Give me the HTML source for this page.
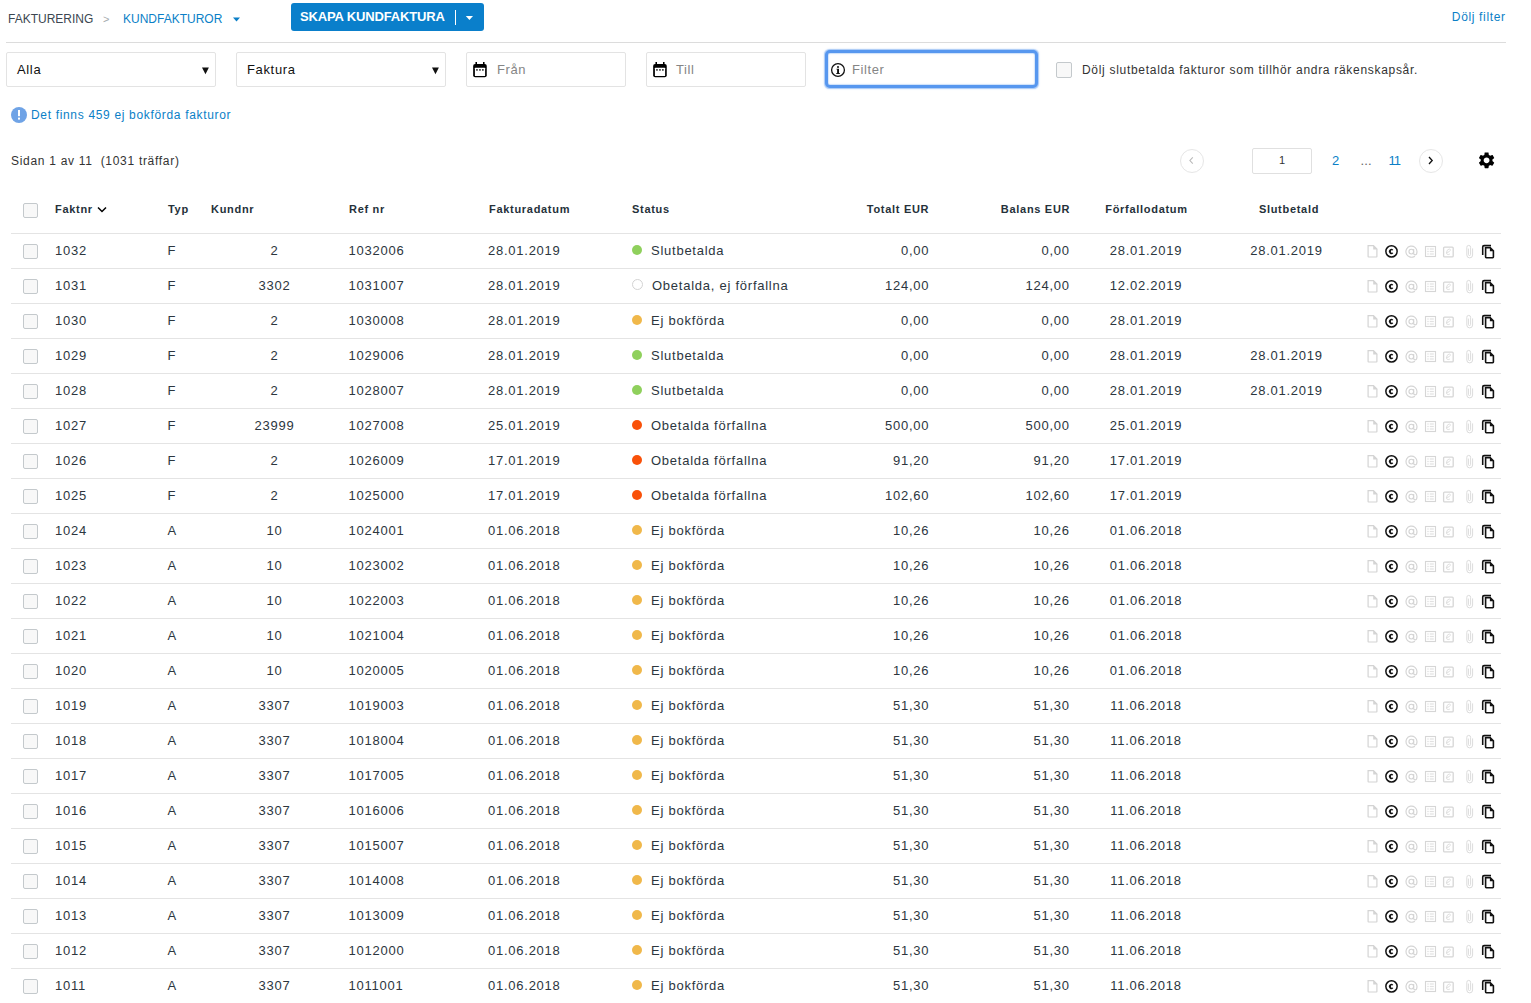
<!DOCTYPE html>
<html><head><meta charset="utf-8"><title>Kundfakturor</title>
<style>
html,body{margin:0;padding:0;background:#fff;width:1531px;height:1003px;overflow:hidden;position:relative}
body{font-family:"Liberation Sans",sans-serif}
.t{position:absolute;white-space:pre;line-height:1;font-family:"Liberation Sans",sans-serif}
svg{display:block}
</style></head><body>
<div class="t" style="left:8px;top:13px;font-size:12px;letter-spacing:0px;color:#3b4751;font-weight:normal;">FAKTURERING</div>
<div class="t" style="left:103px;top:13.5px;font-size:11px;color:#a5aaae">&gt;</div>
<div class="t" style="left:123px;top:13px;font-size:12px;letter-spacing:0px;color:#0b7fc7;font-weight:normal;">KUNDFAKTUROR</div>
<svg style="position:absolute;left:233px;top:17px" width="7" height="5"><path d="M0 0.5 L7 0.5 L3.5 4.5 Z" fill="#0b7fc7"/></svg>
<div style="position:absolute;left:291px;top:3px;width:193px;height:28px;background:#0a7fcb;border-radius:3px"></div>
<div class="t" style="left:300px;top:10px;font-size:13px;letter-spacing:-0.15px;color:#fff;font-weight:bold;">SKAPA KUNDFAKTURA</div>
<div style="position:absolute;left:455px;top:10px;width:1px;height:15px;background:#fff"></div>
<svg style="position:absolute;left:465px;top:15px" width="9" height="6"><path d="M0.8 1 L8 1 L4.4 5 Z" fill="#fff"/></svg>
<div class="t" style="right:25.35px;top:11px;font-size:12px;letter-spacing:0.65px;color:#0b7fc7;font-weight:normal;">Dölj filter</div>
<div style="position:absolute;left:6px;top:42px;width:1500px;height:1px;background:#dcdcdc"></div>
<div style="position:absolute;left:6px;top:52px;width:208px;height:33px;border:1px solid #e3e3e3;border-radius:2px;background:#fff"></div>
<div style="position:absolute;left:236px;top:52px;width:208px;height:33px;border:1px solid #e3e3e3;border-radius:2px;background:#fff"></div>
<div style="position:absolute;left:466px;top:52px;width:158px;height:33px;border:1px solid #e3e3e3;border-radius:2px;background:#fff"></div>
<div style="position:absolute;left:646px;top:52px;width:158px;height:33px;border:1px solid #e3e3e3;border-radius:2px;background:#fff"></div>
<div class="t" style="left:17px;top:63px;font-size:13px;letter-spacing:0.65px;color:#111;font-weight:normal;">Alla</div>
<div class="t" style="left:247px;top:63px;font-size:13px;letter-spacing:0.65px;color:#111;font-weight:normal;">Faktura</div>
<svg style="position:absolute;left:202px;top:67px" width="8" height="8"><path d="M0 0.5 L6.9 0.5 L3.45 7.3 Z" fill="#111"/></svg>
<svg style="position:absolute;left:432px;top:67px" width="8" height="8"><path d="M0 0.5 L6.9 0.5 L3.45 7.3 Z" fill="#111"/></svg>
<svg style="position:absolute;left:472px;top:62px" width="16" height="16" viewBox="0 0 16 16"><rect x="3.45" y="0" width="1.55" height="3" fill="#000"/><rect x="11" y="0" width="1.55" height="3" fill="#000"/><rect x="1.15" y="1.9" width="13.6" height="13.4" rx="2" fill="#000"/><rect x="2.9" y="5.65" width="10.2" height="8.35" rx="0.5" fill="#fff"/><rect x="4.1" y="7.1" width="1.7" height="1.6" fill="#333"/><rect x="7.1" y="7.1" width="1.7" height="1.6" fill="#333"/><rect x="10" y="7.1" width="1.7" height="1.6" fill="#333"/></svg>
<svg style="position:absolute;left:652px;top:62px" width="16" height="16" viewBox="0 0 16 16"><rect x="3.45" y="0" width="1.55" height="3" fill="#000"/><rect x="11" y="0" width="1.55" height="3" fill="#000"/><rect x="1.15" y="1.9" width="13.6" height="13.4" rx="2" fill="#000"/><rect x="2.9" y="5.65" width="10.2" height="8.35" rx="0.5" fill="#fff"/><rect x="4.1" y="7.1" width="1.7" height="1.6" fill="#333"/><rect x="7.1" y="7.1" width="1.7" height="1.6" fill="#333"/><rect x="10" y="7.1" width="1.7" height="1.6" fill="#333"/></svg>
<div class="t" style="left:497px;top:63px;font-size:13px;letter-spacing:0.6px;color:#858585;font-weight:normal;">Från</div>
<div class="t" style="left:676px;top:63px;font-size:13px;letter-spacing:0.6px;color:#858585;font-weight:normal;">Till</div>
<div style="position:absolute;left:825px;top:50px;width:207px;height:32px;border:3px solid #5797ef;border-radius:5px;background:#fff;box-shadow:0 0 1.2px 0.4px rgba(87,151,239,0.55), inset 0 0 1.2px 0.4px rgba(87,151,239,0.55)"></div>
<svg style="position:absolute;left:830px;top:62px" width="16" height="16" viewBox="0 0 16 16"><circle cx="8" cy="8" r="6.4" fill="none" stroke="#111" stroke-width="1.3"/><circle cx="8" cy="4.9" r="1" fill="#111"/><path d="M6.5 6.7 H9 V11 H9.8 V11.9 H6.3 V11 H7.1 V7.6 H6.5 Z" fill="#111"/></svg>
<div class="t" style="left:852px;top:63px;font-size:13px;letter-spacing:0.6px;color:#858585;font-weight:normal;">Filter</div>
<div style="position:absolute;left:1056px;top:62px;width:14px;height:14px;border:1px solid #c4c9cc;border-radius:2px;background:#f8f8f8"></div>
<div class="t" style="left:1082px;top:64px;font-size:12px;letter-spacing:0.7px;color:#333;font-weight:normal;">Dölj slutbetalda fakturor som tillhör andra räkenskapsår.</div>
<svg style="position:absolute;left:11px;top:107px" width="16" height="16" viewBox="0 0 16 16"><circle cx="8" cy="8" r="8" fill="#6fa3e6"/><rect x="7" y="3" width="2" height="6.2" fill="#fff"/><rect x="7" y="10.6" width="2" height="2" fill="#fff"/></svg>
<div class="t" style="left:31px;top:109px;font-size:12px;letter-spacing:0.67px;color:#0b7fc7;font-weight:normal;">Det finns 459 ej bokförda fakturor</div>
<div class="t" style="left:11px;top:155px;font-size:12px;letter-spacing:0.7px;color:#333;font-weight:normal;">Sidan 1 av 11&nbsp; (1031 träffar)</div>
<div style="position:absolute;left:1180px;top:149px;width:22px;height:22px;border:1px solid #e6e6e6;border-radius:50%"></div>
<svg style="position:absolute;left:1188px;top:156px" width="7" height="9"><path d="M4.8 1.3 L1.9 4.5 L4.8 7.7" fill="none" stroke="#b8b8b8" stroke-width="1.1"/></svg>
<div style="position:absolute;left:1252px;top:148px;width:58px;height:24px;border:1px solid #e0e0e0;border-radius:2px"></div>
<div class="t" style="left:1082px;width:400px;text-align:center;top:155px;font-size:11px;letter-spacing:0px;color:#333;font-weight:normal;">1</div>
<div class="t" style="left:1332px;top:154px;font-size:13px;letter-spacing:0px;color:#0b7fc7;font-weight:normal;">2</div>
<div class="t" style="left:1360.5px;top:154px;font-size:13px;letter-spacing:0.2px;color:#666;font-weight:normal;">...</div>
<div class="t" style="left:1388.5px;top:154px;font-size:13px;letter-spacing:-0.9px;color:#0b7fc7;font-weight:normal;">11</div>
<div style="position:absolute;left:1419px;top:149px;width:22px;height:22px;border:1px solid #e6e6e6;border-radius:50%"></div>
<svg style="position:absolute;left:1427px;top:156px" width="7" height="9"><path d="M2 1 L5.2 4.5 L2 8" fill="none" stroke="#111" stroke-width="1.3"/></svg>
<svg style="position:absolute;left:1476px;top:150px" width="20" height="20" viewBox="0 0 20 20"><g transform="translate(0.8 0.57) scale(0.815)"><path fill="#000" d="M19.14 12.94c.04-.3.06-.61.06-.94 0-.32-.02-.64-.07-.94l2.03-1.58c.18-.14.23-.41.12-.61l-1.92-3.32c-.12-.22-.37-.29-.59-.22l-2.39.96c-.5-.38-1.03-.7-1.62-.94l-.36-2.54c-.04-.24-.24-.41-.48-.41h-3.84c-.24 0-.43.17-.47.41l-.36 2.54c-.59.24-1.130.57-1.62.94l-2.39-.96c-.22-.08-.47 0-.59.22L2.74 8.87c-.12.21-.08.47.12.61l2.03 1.58c-.05.3-.09.63-.09.94s.02.64.07.94l-2.03 1.58c-.18.14-.23.41-.12.61l1.92 3.320c.12.22.37.29.59.22l2.39-.96c.5.38 1.03.7 1.62.94l.36 2.54c.05.24.24.41.48.41h3.84c.24 0 .44-.17.47-.41l.36-2.54c.59-.24 1.13-.56 1.62-.94l2.39.96c.22.08.47 0 .59-.22l1.92-3.32c.12-.22.07-.47-.12-.61l-2.01-1.58zM12 15.6c-1.98 0-3.6-1.62-3.6-3.6s1.62-3.6 3.6-3.6 3.6 1.62 3.6 3.6-1.62 3.6-3.6 3.6z"/></g></svg>
<div style="position:absolute;left:23px;top:203px;width:13px;height:13px;border:1px solid #c4c9cc;border-radius:2px;background:#f8f8f8"></div>
<div class="t" style="left:55px;top:204px;font-size:11px;letter-spacing:0.7px;color:#25313a;font-weight:bold;">Faktnr</div>
<svg style="position:absolute;left:97px;top:206px" width="10" height="8"><path d="M1 1.5 L5 5.5 L9 1.5" fill="none" stroke="#000" stroke-width="1.5"/></svg>
<div class="t" style="left:168px;top:204px;font-size:11px;letter-spacing:0.7px;color:#25313a;font-weight:bold;">Typ</div>
<div class="t" style="left:211px;top:204px;font-size:11px;letter-spacing:0.7px;color:#25313a;font-weight:bold;">Kundnr</div>
<div class="t" style="left:349px;top:204px;font-size:11px;letter-spacing:0.7px;color:#25313a;font-weight:bold;">Ref nr</div>
<div class="t" style="left:489px;top:204px;font-size:11px;letter-spacing:0.7px;color:#25313a;font-weight:bold;">Fakturadatum</div>
<div class="t" style="left:632px;top:204px;font-size:11px;letter-spacing:0.7px;color:#25313a;font-weight:bold;">Status</div>
<div class="t" style="right:601.8px;top:204px;font-size:11px;letter-spacing:0.7px;color:#25313a;font-weight:bold;">Totalt EUR</div>
<div class="t" style="right:460.8px;top:204px;font-size:11px;letter-spacing:0.7px;color:#25313a;font-weight:bold;">Balans EUR</div>
<div class="t" style="left:946.5px;width:400px;text-align:center;top:204px;font-size:11px;letter-spacing:0.7px;color:#25313a;font-weight:bold;">Förfallodatum</div>
<div class="t" style="left:1089px;width:400px;text-align:center;top:204px;font-size:11px;letter-spacing:0.7px;color:#25313a;font-weight:bold;">Slutbetald</div>
<div style="position:absolute;left:11px;top:233px;width:1490px;height:1px;background:#e4e4e4"></div>
<div style="position:absolute;left:11px;top:268px;width:1490px;height:1px;background:#e4e4e4"></div>
<div style="position:absolute;left:11px;top:303px;width:1490px;height:1px;background:#e4e4e4"></div>
<div style="position:absolute;left:11px;top:338px;width:1490px;height:1px;background:#e4e4e4"></div>
<div style="position:absolute;left:11px;top:373px;width:1490px;height:1px;background:#e4e4e4"></div>
<div style="position:absolute;left:11px;top:408px;width:1490px;height:1px;background:#e4e4e4"></div>
<div style="position:absolute;left:11px;top:443px;width:1490px;height:1px;background:#e4e4e4"></div>
<div style="position:absolute;left:11px;top:478px;width:1490px;height:1px;background:#e4e4e4"></div>
<div style="position:absolute;left:11px;top:513px;width:1490px;height:1px;background:#e4e4e4"></div>
<div style="position:absolute;left:11px;top:548px;width:1490px;height:1px;background:#e4e4e4"></div>
<div style="position:absolute;left:11px;top:583px;width:1490px;height:1px;background:#e4e4e4"></div>
<div style="position:absolute;left:11px;top:618px;width:1490px;height:1px;background:#e4e4e4"></div>
<div style="position:absolute;left:11px;top:653px;width:1490px;height:1px;background:#e4e4e4"></div>
<div style="position:absolute;left:11px;top:688px;width:1490px;height:1px;background:#e4e4e4"></div>
<div style="position:absolute;left:11px;top:723px;width:1490px;height:1px;background:#e4e4e4"></div>
<div style="position:absolute;left:11px;top:758px;width:1490px;height:1px;background:#e4e4e4"></div>
<div style="position:absolute;left:11px;top:793px;width:1490px;height:1px;background:#e4e4e4"></div>
<div style="position:absolute;left:11px;top:828px;width:1490px;height:1px;background:#e4e4e4"></div>
<div style="position:absolute;left:11px;top:863px;width:1490px;height:1px;background:#e4e4e4"></div>
<div style="position:absolute;left:11px;top:898px;width:1490px;height:1px;background:#e4e4e4"></div>
<div style="position:absolute;left:11px;top:933px;width:1490px;height:1px;background:#e4e4e4"></div>
<div style="position:absolute;left:11px;top:968px;width:1490px;height:1px;background:#e4e4e4"></div>
<div style="position:absolute;left:11px;top:1003px;width:1490px;height:1px;background:#e4e4e4"></div>
<div style="position:absolute;left:23px;top:244px;width:13px;height:13px;border:1px solid #c4c9cc;border-radius:2px;background:#f8f8f8"></div>
<div class="t" style="left:55px;top:244px;font-size:13px;letter-spacing:0.75px;color:#2c363e;font-weight:normal;">1032</div>
<div class="t" style="left:167.5px;top:244px;font-size:13px;letter-spacing:0.75px;color:#2c363e;font-weight:normal;">F</div>
<div class="t" style="left:74.5px;width:400px;text-align:center;top:244px;font-size:13px;letter-spacing:0.75px;color:#2c363e;font-weight:normal;">2</div>
<div class="t" style="left:348.5px;top:244px;font-size:13px;letter-spacing:0.75px;color:#2c363e;font-weight:normal;">1032006</div>
<div class="t" style="left:488px;top:244px;font-size:13px;letter-spacing:0.75px;color:#2c363e;font-weight:normal;">28.01.2019</div>
<div style="position:absolute;left:632px;top:245px;width:10px;height:10px;border-radius:50%;background:#8fd05c"></div>
<div class="t" style="left:651px;top:244px;font-size:13px;letter-spacing:0.75px;color:#2c363e;font-weight:normal;">Slutbetalda</div>
<div class="t" style="right:601.75px;top:244px;font-size:13px;letter-spacing:0.75px;color:#2c363e;font-weight:normal;">0,00</div>
<div class="t" style="right:461.25px;top:244px;font-size:13px;letter-spacing:0.75px;color:#2c363e;font-weight:normal;">0,00</div>
<div class="t" style="left:946px;width:400px;text-align:center;top:244px;font-size:13px;letter-spacing:0.75px;color:#2c363e;font-weight:normal;">28.01.2019</div>
<div class="t" style="left:1086.5px;width:400px;text-align:center;top:244px;font-size:13px;letter-spacing:0.75px;color:#2c363e;font-weight:normal;">28.01.2019</div>
<svg style="position:absolute;left:1366px;top:244px" width="132" height="16" viewBox="0 0 132 16">
<path d="M2.1 1.7 H7.5 L10.9 5.1 V12.6 Q10.9 13 10.5 13 H2.5 Q2.1 13 2.1 12.6 Z" fill="none" stroke="#d4d4d4" stroke-width="1.2"/><path d="M7.2 1.2 L11.4 5.4 H7.2 Z" fill="#d4d4d4"/>
<circle cx="25.5" cy="7.35" r="5.65" fill="none" stroke="#111" stroke-width="1.5"/><path d="M27.35 5.95 A2.45 2.55 0 1 0 27.35 9.05 L26.05 8.45 A0.8 1.05 0 1 1 26.05 6.55 Z" fill="#111"/>
<circle cx="45.3" cy="7.6" r="2.35" fill="none" stroke="#d4d4d4" stroke-width="1.15"/><path d="M47.65 5 V9.3 Q47.65 10.9 49.1 10.9 Q51 10.9 51 7.6 A5.55 5.55 0 1 0 48.3 12.4 L48.9 12.9" fill="none" stroke="#d4d4d4" stroke-width="1.15"/>
<rect x="59.5" y="2.5" width="10" height="10" fill="none" stroke="#d6d6d6" stroke-width="1.1"/><rect x="61.3" y="4.4" width="1.4" height="1.2" fill="#e2e2e2"/><rect x="61.3" y="6.9" width="1.4" height="1.2" fill="#e2e2e2"/><rect x="61.3" y="9.4" width="1.4" height="1.2" fill="#e2e2e2"/><rect x="63.8" y="4.4" width="4" height="1.2" fill="#e2e2e2"/><rect x="63.8" y="6.9" width="4" height="1.2" fill="#e2e2e2"/><rect x="63.8" y="9.4" width="4" height="1.2" fill="#e2e2e2"/>
<rect x="77.6" y="3.1" width="9.6" height="9.8" rx="1" fill="none" stroke="#d6d6d6" stroke-width="1.3"/><path d="M80.4 8.6 Q83.5 8.3 84.3 6.3 Q84.6 5 83.4 5 Q81.2 5.1 80.5 8.2 Q80.2 10.6 82.2 10.6 Q83.3 10.5 84 9.8" fill="none" stroke="#d8d8d8" stroke-width="0.8"/>
<path d="M102.4 4.6 V10.4 A1.1 1.1 0 0 0 104.6 10.4 V3.3 A1.9 1.9 0 0 0 100.8 3.3 V11 A2.9 2.9 0 0 0 106.6 11 V4.4" fill="none" stroke="#dcdcdc" stroke-width="1"/>
<path d="M116.7 10.9 V3 Q116.7 1.6 118.1 1.6 H125" fill="none" stroke="#111" stroke-width="1.55"/><path d="M119.6 3.8 H124.3 L127.4 6.9 V13.1 Q127.4 13.7 126.8 13.7 H120.2 Q119.6 13.7 119.6 13.1 Z" fill="none" stroke="#111" stroke-width="1.6"/><path d="M123.9 3.4 L127.8 7.3 H123.9 Z" fill="#111"/>
</svg>
<div style="position:absolute;left:23px;top:279px;width:13px;height:13px;border:1px solid #c4c9cc;border-radius:2px;background:#f8f8f8"></div>
<div class="t" style="left:55px;top:279px;font-size:13px;letter-spacing:0.75px;color:#2c363e;font-weight:normal;">1031</div>
<div class="t" style="left:167.5px;top:279px;font-size:13px;letter-spacing:0.75px;color:#2c363e;font-weight:normal;">F</div>
<div class="t" style="left:74.5px;width:400px;text-align:center;top:279px;font-size:13px;letter-spacing:0.75px;color:#2c363e;font-weight:normal;">3302</div>
<div class="t" style="left:348.5px;top:279px;font-size:13px;letter-spacing:0.75px;color:#2c363e;font-weight:normal;">1031007</div>
<div class="t" style="left:488px;top:279px;font-size:13px;letter-spacing:0.75px;color:#2c363e;font-weight:normal;">28.01.2019</div>
<div style="position:absolute;left:632px;top:279px;width:9px;height:9px;border-radius:50%;border:1px solid #d3d3d3"></div>
<div class="t" style="left:652px;top:279px;font-size:13px;letter-spacing:0.75px;color:#2c363e;font-weight:normal;">Obetalda, ej förfallna</div>
<div class="t" style="right:601.75px;top:279px;font-size:13px;letter-spacing:0.75px;color:#2c363e;font-weight:normal;">124,00</div>
<div class="t" style="right:461.25px;top:279px;font-size:13px;letter-spacing:0.75px;color:#2c363e;font-weight:normal;">124,00</div>
<div class="t" style="left:946px;width:400px;text-align:center;top:279px;font-size:13px;letter-spacing:0.75px;color:#2c363e;font-weight:normal;">12.02.2019</div>
<svg style="position:absolute;left:1366px;top:279px" width="132" height="16" viewBox="0 0 132 16">
<path d="M2.1 1.7 H7.5 L10.9 5.1 V12.6 Q10.9 13 10.5 13 H2.5 Q2.1 13 2.1 12.6 Z" fill="none" stroke="#d4d4d4" stroke-width="1.2"/><path d="M7.2 1.2 L11.4 5.4 H7.2 Z" fill="#d4d4d4"/>
<circle cx="25.5" cy="7.35" r="5.65" fill="none" stroke="#111" stroke-width="1.5"/><path d="M27.35 5.95 A2.45 2.55 0 1 0 27.35 9.05 L26.05 8.45 A0.8 1.05 0 1 1 26.05 6.55 Z" fill="#111"/>
<circle cx="45.3" cy="7.6" r="2.35" fill="none" stroke="#d4d4d4" stroke-width="1.15"/><path d="M47.65 5 V9.3 Q47.65 10.9 49.1 10.9 Q51 10.9 51 7.6 A5.55 5.55 0 1 0 48.3 12.4 L48.9 12.9" fill="none" stroke="#d4d4d4" stroke-width="1.15"/>
<rect x="59.5" y="2.5" width="10" height="10" fill="none" stroke="#d6d6d6" stroke-width="1.1"/><rect x="61.3" y="4.4" width="1.4" height="1.2" fill="#e2e2e2"/><rect x="61.3" y="6.9" width="1.4" height="1.2" fill="#e2e2e2"/><rect x="61.3" y="9.4" width="1.4" height="1.2" fill="#e2e2e2"/><rect x="63.8" y="4.4" width="4" height="1.2" fill="#e2e2e2"/><rect x="63.8" y="6.9" width="4" height="1.2" fill="#e2e2e2"/><rect x="63.8" y="9.4" width="4" height="1.2" fill="#e2e2e2"/>
<rect x="77.6" y="3.1" width="9.6" height="9.8" rx="1" fill="none" stroke="#d6d6d6" stroke-width="1.3"/><path d="M80.4 8.6 Q83.5 8.3 84.3 6.3 Q84.6 5 83.4 5 Q81.2 5.1 80.5 8.2 Q80.2 10.6 82.2 10.6 Q83.3 10.5 84 9.8" fill="none" stroke="#d8d8d8" stroke-width="0.8"/>
<path d="M102.4 4.6 V10.4 A1.1 1.1 0 0 0 104.6 10.4 V3.3 A1.9 1.9 0 0 0 100.8 3.3 V11 A2.9 2.9 0 0 0 106.6 11 V4.4" fill="none" stroke="#dcdcdc" stroke-width="1"/>
<path d="M116.7 10.9 V3 Q116.7 1.6 118.1 1.6 H125" fill="none" stroke="#111" stroke-width="1.55"/><path d="M119.6 3.8 H124.3 L127.4 6.9 V13.1 Q127.4 13.7 126.8 13.7 H120.2 Q119.6 13.7 119.6 13.1 Z" fill="none" stroke="#111" stroke-width="1.6"/><path d="M123.9 3.4 L127.8 7.3 H123.9 Z" fill="#111"/>
</svg>
<div style="position:absolute;left:23px;top:314px;width:13px;height:13px;border:1px solid #c4c9cc;border-radius:2px;background:#f8f8f8"></div>
<div class="t" style="left:55px;top:314px;font-size:13px;letter-spacing:0.75px;color:#2c363e;font-weight:normal;">1030</div>
<div class="t" style="left:167.5px;top:314px;font-size:13px;letter-spacing:0.75px;color:#2c363e;font-weight:normal;">F</div>
<div class="t" style="left:74.5px;width:400px;text-align:center;top:314px;font-size:13px;letter-spacing:0.75px;color:#2c363e;font-weight:normal;">2</div>
<div class="t" style="left:348.5px;top:314px;font-size:13px;letter-spacing:0.75px;color:#2c363e;font-weight:normal;">1030008</div>
<div class="t" style="left:488px;top:314px;font-size:13px;letter-spacing:0.75px;color:#2c363e;font-weight:normal;">28.01.2019</div>
<div style="position:absolute;left:632px;top:315px;width:10px;height:10px;border-radius:50%;background:#f0b84a"></div>
<div class="t" style="left:651px;top:314px;font-size:13px;letter-spacing:0.75px;color:#2c363e;font-weight:normal;">Ej bokförda</div>
<div class="t" style="right:601.75px;top:314px;font-size:13px;letter-spacing:0.75px;color:#2c363e;font-weight:normal;">0,00</div>
<div class="t" style="right:461.25px;top:314px;font-size:13px;letter-spacing:0.75px;color:#2c363e;font-weight:normal;">0,00</div>
<div class="t" style="left:946px;width:400px;text-align:center;top:314px;font-size:13px;letter-spacing:0.75px;color:#2c363e;font-weight:normal;">28.01.2019</div>
<svg style="position:absolute;left:1366px;top:314px" width="132" height="16" viewBox="0 0 132 16">
<path d="M2.1 1.7 H7.5 L10.9 5.1 V12.6 Q10.9 13 10.5 13 H2.5 Q2.1 13 2.1 12.6 Z" fill="none" stroke="#d4d4d4" stroke-width="1.2"/><path d="M7.2 1.2 L11.4 5.4 H7.2 Z" fill="#d4d4d4"/>
<circle cx="25.5" cy="7.35" r="5.65" fill="none" stroke="#111" stroke-width="1.5"/><path d="M27.35 5.95 A2.45 2.55 0 1 0 27.35 9.05 L26.05 8.45 A0.8 1.05 0 1 1 26.05 6.55 Z" fill="#111"/>
<circle cx="45.3" cy="7.6" r="2.35" fill="none" stroke="#d4d4d4" stroke-width="1.15"/><path d="M47.65 5 V9.3 Q47.65 10.9 49.1 10.9 Q51 10.9 51 7.6 A5.55 5.55 0 1 0 48.3 12.4 L48.9 12.9" fill="none" stroke="#d4d4d4" stroke-width="1.15"/>
<rect x="59.5" y="2.5" width="10" height="10" fill="none" stroke="#d6d6d6" stroke-width="1.1"/><rect x="61.3" y="4.4" width="1.4" height="1.2" fill="#e2e2e2"/><rect x="61.3" y="6.9" width="1.4" height="1.2" fill="#e2e2e2"/><rect x="61.3" y="9.4" width="1.4" height="1.2" fill="#e2e2e2"/><rect x="63.8" y="4.4" width="4" height="1.2" fill="#e2e2e2"/><rect x="63.8" y="6.9" width="4" height="1.2" fill="#e2e2e2"/><rect x="63.8" y="9.4" width="4" height="1.2" fill="#e2e2e2"/>
<rect x="77.6" y="3.1" width="9.6" height="9.8" rx="1" fill="none" stroke="#d6d6d6" stroke-width="1.3"/><path d="M80.4 8.6 Q83.5 8.3 84.3 6.3 Q84.6 5 83.4 5 Q81.2 5.1 80.5 8.2 Q80.2 10.6 82.2 10.6 Q83.3 10.5 84 9.8" fill="none" stroke="#d8d8d8" stroke-width="0.8"/>
<path d="M102.4 4.6 V10.4 A1.1 1.1 0 0 0 104.6 10.4 V3.3 A1.9 1.9 0 0 0 100.8 3.3 V11 A2.9 2.9 0 0 0 106.6 11 V4.4" fill="none" stroke="#dcdcdc" stroke-width="1"/>
<path d="M116.7 10.9 V3 Q116.7 1.6 118.1 1.6 H125" fill="none" stroke="#111" stroke-width="1.55"/><path d="M119.6 3.8 H124.3 L127.4 6.9 V13.1 Q127.4 13.7 126.8 13.7 H120.2 Q119.6 13.7 119.6 13.1 Z" fill="none" stroke="#111" stroke-width="1.6"/><path d="M123.9 3.4 L127.8 7.3 H123.9 Z" fill="#111"/>
</svg>
<div style="position:absolute;left:23px;top:349px;width:13px;height:13px;border:1px solid #c4c9cc;border-radius:2px;background:#f8f8f8"></div>
<div class="t" style="left:55px;top:349px;font-size:13px;letter-spacing:0.75px;color:#2c363e;font-weight:normal;">1029</div>
<div class="t" style="left:167.5px;top:349px;font-size:13px;letter-spacing:0.75px;color:#2c363e;font-weight:normal;">F</div>
<div class="t" style="left:74.5px;width:400px;text-align:center;top:349px;font-size:13px;letter-spacing:0.75px;color:#2c363e;font-weight:normal;">2</div>
<div class="t" style="left:348.5px;top:349px;font-size:13px;letter-spacing:0.75px;color:#2c363e;font-weight:normal;">1029006</div>
<div class="t" style="left:488px;top:349px;font-size:13px;letter-spacing:0.75px;color:#2c363e;font-weight:normal;">28.01.2019</div>
<div style="position:absolute;left:632px;top:350px;width:10px;height:10px;border-radius:50%;background:#8fd05c"></div>
<div class="t" style="left:651px;top:349px;font-size:13px;letter-spacing:0.75px;color:#2c363e;font-weight:normal;">Slutbetalda</div>
<div class="t" style="right:601.75px;top:349px;font-size:13px;letter-spacing:0.75px;color:#2c363e;font-weight:normal;">0,00</div>
<div class="t" style="right:461.25px;top:349px;font-size:13px;letter-spacing:0.75px;color:#2c363e;font-weight:normal;">0,00</div>
<div class="t" style="left:946px;width:400px;text-align:center;top:349px;font-size:13px;letter-spacing:0.75px;color:#2c363e;font-weight:normal;">28.01.2019</div>
<div class="t" style="left:1086.5px;width:400px;text-align:center;top:349px;font-size:13px;letter-spacing:0.75px;color:#2c363e;font-weight:normal;">28.01.2019</div>
<svg style="position:absolute;left:1366px;top:349px" width="132" height="16" viewBox="0 0 132 16">
<path d="M2.1 1.7 H7.5 L10.9 5.1 V12.6 Q10.9 13 10.5 13 H2.5 Q2.1 13 2.1 12.6 Z" fill="none" stroke="#d4d4d4" stroke-width="1.2"/><path d="M7.2 1.2 L11.4 5.4 H7.2 Z" fill="#d4d4d4"/>
<circle cx="25.5" cy="7.35" r="5.65" fill="none" stroke="#111" stroke-width="1.5"/><path d="M27.35 5.95 A2.45 2.55 0 1 0 27.35 9.05 L26.05 8.45 A0.8 1.05 0 1 1 26.05 6.55 Z" fill="#111"/>
<circle cx="45.3" cy="7.6" r="2.35" fill="none" stroke="#d4d4d4" stroke-width="1.15"/><path d="M47.65 5 V9.3 Q47.65 10.9 49.1 10.9 Q51 10.9 51 7.6 A5.55 5.55 0 1 0 48.3 12.4 L48.9 12.9" fill="none" stroke="#d4d4d4" stroke-width="1.15"/>
<rect x="59.5" y="2.5" width="10" height="10" fill="none" stroke="#d6d6d6" stroke-width="1.1"/><rect x="61.3" y="4.4" width="1.4" height="1.2" fill="#e2e2e2"/><rect x="61.3" y="6.9" width="1.4" height="1.2" fill="#e2e2e2"/><rect x="61.3" y="9.4" width="1.4" height="1.2" fill="#e2e2e2"/><rect x="63.8" y="4.4" width="4" height="1.2" fill="#e2e2e2"/><rect x="63.8" y="6.9" width="4" height="1.2" fill="#e2e2e2"/><rect x="63.8" y="9.4" width="4" height="1.2" fill="#e2e2e2"/>
<rect x="77.6" y="3.1" width="9.6" height="9.8" rx="1" fill="none" stroke="#d6d6d6" stroke-width="1.3"/><path d="M80.4 8.6 Q83.5 8.3 84.3 6.3 Q84.6 5 83.4 5 Q81.2 5.1 80.5 8.2 Q80.2 10.6 82.2 10.6 Q83.3 10.5 84 9.8" fill="none" stroke="#d8d8d8" stroke-width="0.8"/>
<path d="M102.4 4.6 V10.4 A1.1 1.1 0 0 0 104.6 10.4 V3.3 A1.9 1.9 0 0 0 100.8 3.3 V11 A2.9 2.9 0 0 0 106.6 11 V4.4" fill="none" stroke="#dcdcdc" stroke-width="1"/>
<path d="M116.7 10.9 V3 Q116.7 1.6 118.1 1.6 H125" fill="none" stroke="#111" stroke-width="1.55"/><path d="M119.6 3.8 H124.3 L127.4 6.9 V13.1 Q127.4 13.7 126.8 13.7 H120.2 Q119.6 13.7 119.6 13.1 Z" fill="none" stroke="#111" stroke-width="1.6"/><path d="M123.9 3.4 L127.8 7.3 H123.9 Z" fill="#111"/>
</svg>
<div style="position:absolute;left:23px;top:384px;width:13px;height:13px;border:1px solid #c4c9cc;border-radius:2px;background:#f8f8f8"></div>
<div class="t" style="left:55px;top:384px;font-size:13px;letter-spacing:0.75px;color:#2c363e;font-weight:normal;">1028</div>
<div class="t" style="left:167.5px;top:384px;font-size:13px;letter-spacing:0.75px;color:#2c363e;font-weight:normal;">F</div>
<div class="t" style="left:74.5px;width:400px;text-align:center;top:384px;font-size:13px;letter-spacing:0.75px;color:#2c363e;font-weight:normal;">2</div>
<div class="t" style="left:348.5px;top:384px;font-size:13px;letter-spacing:0.75px;color:#2c363e;font-weight:normal;">1028007</div>
<div class="t" style="left:488px;top:384px;font-size:13px;letter-spacing:0.75px;color:#2c363e;font-weight:normal;">28.01.2019</div>
<div style="position:absolute;left:632px;top:385px;width:10px;height:10px;border-radius:50%;background:#8fd05c"></div>
<div class="t" style="left:651px;top:384px;font-size:13px;letter-spacing:0.75px;color:#2c363e;font-weight:normal;">Slutbetalda</div>
<div class="t" style="right:601.75px;top:384px;font-size:13px;letter-spacing:0.75px;color:#2c363e;font-weight:normal;">0,00</div>
<div class="t" style="right:461.25px;top:384px;font-size:13px;letter-spacing:0.75px;color:#2c363e;font-weight:normal;">0,00</div>
<div class="t" style="left:946px;width:400px;text-align:center;top:384px;font-size:13px;letter-spacing:0.75px;color:#2c363e;font-weight:normal;">28.01.2019</div>
<div class="t" style="left:1086.5px;width:400px;text-align:center;top:384px;font-size:13px;letter-spacing:0.75px;color:#2c363e;font-weight:normal;">28.01.2019</div>
<svg style="position:absolute;left:1366px;top:384px" width="132" height="16" viewBox="0 0 132 16">
<path d="M2.1 1.7 H7.5 L10.9 5.1 V12.6 Q10.9 13 10.5 13 H2.5 Q2.1 13 2.1 12.6 Z" fill="none" stroke="#d4d4d4" stroke-width="1.2"/><path d="M7.2 1.2 L11.4 5.4 H7.2 Z" fill="#d4d4d4"/>
<circle cx="25.5" cy="7.35" r="5.65" fill="none" stroke="#111" stroke-width="1.5"/><path d="M27.35 5.95 A2.45 2.55 0 1 0 27.35 9.05 L26.05 8.45 A0.8 1.05 0 1 1 26.05 6.55 Z" fill="#111"/>
<circle cx="45.3" cy="7.6" r="2.35" fill="none" stroke="#d4d4d4" stroke-width="1.15"/><path d="M47.65 5 V9.3 Q47.65 10.9 49.1 10.9 Q51 10.9 51 7.6 A5.55 5.55 0 1 0 48.3 12.4 L48.9 12.9" fill="none" stroke="#d4d4d4" stroke-width="1.15"/>
<rect x="59.5" y="2.5" width="10" height="10" fill="none" stroke="#d6d6d6" stroke-width="1.1"/><rect x="61.3" y="4.4" width="1.4" height="1.2" fill="#e2e2e2"/><rect x="61.3" y="6.9" width="1.4" height="1.2" fill="#e2e2e2"/><rect x="61.3" y="9.4" width="1.4" height="1.2" fill="#e2e2e2"/><rect x="63.8" y="4.4" width="4" height="1.2" fill="#e2e2e2"/><rect x="63.8" y="6.9" width="4" height="1.2" fill="#e2e2e2"/><rect x="63.8" y="9.4" width="4" height="1.2" fill="#e2e2e2"/>
<rect x="77.6" y="3.1" width="9.6" height="9.8" rx="1" fill="none" stroke="#d6d6d6" stroke-width="1.3"/><path d="M80.4 8.6 Q83.5 8.3 84.3 6.3 Q84.6 5 83.4 5 Q81.2 5.1 80.5 8.2 Q80.2 10.6 82.2 10.6 Q83.3 10.5 84 9.8" fill="none" stroke="#d8d8d8" stroke-width="0.8"/>
<path d="M102.4 4.6 V10.4 A1.1 1.1 0 0 0 104.6 10.4 V3.3 A1.9 1.9 0 0 0 100.8 3.3 V11 A2.9 2.9 0 0 0 106.6 11 V4.4" fill="none" stroke="#dcdcdc" stroke-width="1"/>
<path d="M116.7 10.9 V3 Q116.7 1.6 118.1 1.6 H125" fill="none" stroke="#111" stroke-width="1.55"/><path d="M119.6 3.8 H124.3 L127.4 6.9 V13.1 Q127.4 13.7 126.8 13.7 H120.2 Q119.6 13.7 119.6 13.1 Z" fill="none" stroke="#111" stroke-width="1.6"/><path d="M123.9 3.4 L127.8 7.3 H123.9 Z" fill="#111"/>
</svg>
<div style="position:absolute;left:23px;top:419px;width:13px;height:13px;border:1px solid #c4c9cc;border-radius:2px;background:#f8f8f8"></div>
<div class="t" style="left:55px;top:419px;font-size:13px;letter-spacing:0.75px;color:#2c363e;font-weight:normal;">1027</div>
<div class="t" style="left:167.5px;top:419px;font-size:13px;letter-spacing:0.75px;color:#2c363e;font-weight:normal;">F</div>
<div class="t" style="left:74.5px;width:400px;text-align:center;top:419px;font-size:13px;letter-spacing:0.75px;color:#2c363e;font-weight:normal;">23999</div>
<div class="t" style="left:348.5px;top:419px;font-size:13px;letter-spacing:0.75px;color:#2c363e;font-weight:normal;">1027008</div>
<div class="t" style="left:488px;top:419px;font-size:13px;letter-spacing:0.75px;color:#2c363e;font-weight:normal;">25.01.2019</div>
<div style="position:absolute;left:632px;top:420px;width:10px;height:10px;border-radius:50%;background:#f95109"></div>
<div class="t" style="left:651px;top:419px;font-size:13px;letter-spacing:0.75px;color:#2c363e;font-weight:normal;">Obetalda förfallna</div>
<div class="t" style="right:601.75px;top:419px;font-size:13px;letter-spacing:0.75px;color:#2c363e;font-weight:normal;">500,00</div>
<div class="t" style="right:461.25px;top:419px;font-size:13px;letter-spacing:0.75px;color:#2c363e;font-weight:normal;">500,00</div>
<div class="t" style="left:946px;width:400px;text-align:center;top:419px;font-size:13px;letter-spacing:0.75px;color:#2c363e;font-weight:normal;">25.01.2019</div>
<svg style="position:absolute;left:1366px;top:419px" width="132" height="16" viewBox="0 0 132 16">
<path d="M2.1 1.7 H7.5 L10.9 5.1 V12.6 Q10.9 13 10.5 13 H2.5 Q2.1 13 2.1 12.6 Z" fill="none" stroke="#d4d4d4" stroke-width="1.2"/><path d="M7.2 1.2 L11.4 5.4 H7.2 Z" fill="#d4d4d4"/>
<circle cx="25.5" cy="7.35" r="5.65" fill="none" stroke="#111" stroke-width="1.5"/><path d="M27.35 5.95 A2.45 2.55 0 1 0 27.35 9.05 L26.05 8.45 A0.8 1.05 0 1 1 26.05 6.55 Z" fill="#111"/>
<circle cx="45.3" cy="7.6" r="2.35" fill="none" stroke="#d4d4d4" stroke-width="1.15"/><path d="M47.65 5 V9.3 Q47.65 10.9 49.1 10.9 Q51 10.9 51 7.6 A5.55 5.55 0 1 0 48.3 12.4 L48.9 12.9" fill="none" stroke="#d4d4d4" stroke-width="1.15"/>
<rect x="59.5" y="2.5" width="10" height="10" fill="none" stroke="#d6d6d6" stroke-width="1.1"/><rect x="61.3" y="4.4" width="1.4" height="1.2" fill="#e2e2e2"/><rect x="61.3" y="6.9" width="1.4" height="1.2" fill="#e2e2e2"/><rect x="61.3" y="9.4" width="1.4" height="1.2" fill="#e2e2e2"/><rect x="63.8" y="4.4" width="4" height="1.2" fill="#e2e2e2"/><rect x="63.8" y="6.9" width="4" height="1.2" fill="#e2e2e2"/><rect x="63.8" y="9.4" width="4" height="1.2" fill="#e2e2e2"/>
<rect x="77.6" y="3.1" width="9.6" height="9.8" rx="1" fill="none" stroke="#d6d6d6" stroke-width="1.3"/><path d="M80.4 8.6 Q83.5 8.3 84.3 6.3 Q84.6 5 83.4 5 Q81.2 5.1 80.5 8.2 Q80.2 10.6 82.2 10.6 Q83.3 10.5 84 9.8" fill="none" stroke="#d8d8d8" stroke-width="0.8"/>
<path d="M102.4 4.6 V10.4 A1.1 1.1 0 0 0 104.6 10.4 V3.3 A1.9 1.9 0 0 0 100.8 3.3 V11 A2.9 2.9 0 0 0 106.6 11 V4.4" fill="none" stroke="#dcdcdc" stroke-width="1"/>
<path d="M116.7 10.9 V3 Q116.7 1.6 118.1 1.6 H125" fill="none" stroke="#111" stroke-width="1.55"/><path d="M119.6 3.8 H124.3 L127.4 6.9 V13.1 Q127.4 13.7 126.8 13.7 H120.2 Q119.6 13.7 119.6 13.1 Z" fill="none" stroke="#111" stroke-width="1.6"/><path d="M123.9 3.4 L127.8 7.3 H123.9 Z" fill="#111"/>
</svg>
<div style="position:absolute;left:23px;top:454px;width:13px;height:13px;border:1px solid #c4c9cc;border-radius:2px;background:#f8f8f8"></div>
<div class="t" style="left:55px;top:454px;font-size:13px;letter-spacing:0.75px;color:#2c363e;font-weight:normal;">1026</div>
<div class="t" style="left:167.5px;top:454px;font-size:13px;letter-spacing:0.75px;color:#2c363e;font-weight:normal;">F</div>
<div class="t" style="left:74.5px;width:400px;text-align:center;top:454px;font-size:13px;letter-spacing:0.75px;color:#2c363e;font-weight:normal;">2</div>
<div class="t" style="left:348.5px;top:454px;font-size:13px;letter-spacing:0.75px;color:#2c363e;font-weight:normal;">1026009</div>
<div class="t" style="left:488px;top:454px;font-size:13px;letter-spacing:0.75px;color:#2c363e;font-weight:normal;">17.01.2019</div>
<div style="position:absolute;left:632px;top:455px;width:10px;height:10px;border-radius:50%;background:#f95109"></div>
<div class="t" style="left:651px;top:454px;font-size:13px;letter-spacing:0.75px;color:#2c363e;font-weight:normal;">Obetalda förfallna</div>
<div class="t" style="right:601.75px;top:454px;font-size:13px;letter-spacing:0.75px;color:#2c363e;font-weight:normal;">91,20</div>
<div class="t" style="right:461.25px;top:454px;font-size:13px;letter-spacing:0.75px;color:#2c363e;font-weight:normal;">91,20</div>
<div class="t" style="left:946px;width:400px;text-align:center;top:454px;font-size:13px;letter-spacing:0.75px;color:#2c363e;font-weight:normal;">17.01.2019</div>
<svg style="position:absolute;left:1366px;top:454px" width="132" height="16" viewBox="0 0 132 16">
<path d="M2.1 1.7 H7.5 L10.9 5.1 V12.6 Q10.9 13 10.5 13 H2.5 Q2.1 13 2.1 12.6 Z" fill="none" stroke="#d4d4d4" stroke-width="1.2"/><path d="M7.2 1.2 L11.4 5.4 H7.2 Z" fill="#d4d4d4"/>
<circle cx="25.5" cy="7.35" r="5.65" fill="none" stroke="#111" stroke-width="1.5"/><path d="M27.35 5.95 A2.45 2.55 0 1 0 27.35 9.05 L26.05 8.45 A0.8 1.05 0 1 1 26.05 6.55 Z" fill="#111"/>
<circle cx="45.3" cy="7.6" r="2.35" fill="none" stroke="#d4d4d4" stroke-width="1.15"/><path d="M47.65 5 V9.3 Q47.65 10.9 49.1 10.9 Q51 10.9 51 7.6 A5.55 5.55 0 1 0 48.3 12.4 L48.9 12.9" fill="none" stroke="#d4d4d4" stroke-width="1.15"/>
<rect x="59.5" y="2.5" width="10" height="10" fill="none" stroke="#d6d6d6" stroke-width="1.1"/><rect x="61.3" y="4.4" width="1.4" height="1.2" fill="#e2e2e2"/><rect x="61.3" y="6.9" width="1.4" height="1.2" fill="#e2e2e2"/><rect x="61.3" y="9.4" width="1.4" height="1.2" fill="#e2e2e2"/><rect x="63.8" y="4.4" width="4" height="1.2" fill="#e2e2e2"/><rect x="63.8" y="6.9" width="4" height="1.2" fill="#e2e2e2"/><rect x="63.8" y="9.4" width="4" height="1.2" fill="#e2e2e2"/>
<rect x="77.6" y="3.1" width="9.6" height="9.8" rx="1" fill="none" stroke="#d6d6d6" stroke-width="1.3"/><path d="M80.4 8.6 Q83.5 8.3 84.3 6.3 Q84.6 5 83.4 5 Q81.2 5.1 80.5 8.2 Q80.2 10.6 82.2 10.6 Q83.3 10.5 84 9.8" fill="none" stroke="#d8d8d8" stroke-width="0.8"/>
<path d="M102.4 4.6 V10.4 A1.1 1.1 0 0 0 104.6 10.4 V3.3 A1.9 1.9 0 0 0 100.8 3.3 V11 A2.9 2.9 0 0 0 106.6 11 V4.4" fill="none" stroke="#dcdcdc" stroke-width="1"/>
<path d="M116.7 10.9 V3 Q116.7 1.6 118.1 1.6 H125" fill="none" stroke="#111" stroke-width="1.55"/><path d="M119.6 3.8 H124.3 L127.4 6.9 V13.1 Q127.4 13.7 126.8 13.7 H120.2 Q119.6 13.7 119.6 13.1 Z" fill="none" stroke="#111" stroke-width="1.6"/><path d="M123.9 3.4 L127.8 7.3 H123.9 Z" fill="#111"/>
</svg>
<div style="position:absolute;left:23px;top:489px;width:13px;height:13px;border:1px solid #c4c9cc;border-radius:2px;background:#f8f8f8"></div>
<div class="t" style="left:55px;top:489px;font-size:13px;letter-spacing:0.75px;color:#2c363e;font-weight:normal;">1025</div>
<div class="t" style="left:167.5px;top:489px;font-size:13px;letter-spacing:0.75px;color:#2c363e;font-weight:normal;">F</div>
<div class="t" style="left:74.5px;width:400px;text-align:center;top:489px;font-size:13px;letter-spacing:0.75px;color:#2c363e;font-weight:normal;">2</div>
<div class="t" style="left:348.5px;top:489px;font-size:13px;letter-spacing:0.75px;color:#2c363e;font-weight:normal;">1025000</div>
<div class="t" style="left:488px;top:489px;font-size:13px;letter-spacing:0.75px;color:#2c363e;font-weight:normal;">17.01.2019</div>
<div style="position:absolute;left:632px;top:490px;width:10px;height:10px;border-radius:50%;background:#f95109"></div>
<div class="t" style="left:651px;top:489px;font-size:13px;letter-spacing:0.75px;color:#2c363e;font-weight:normal;">Obetalda förfallna</div>
<div class="t" style="right:601.75px;top:489px;font-size:13px;letter-spacing:0.75px;color:#2c363e;font-weight:normal;">102,60</div>
<div class="t" style="right:461.25px;top:489px;font-size:13px;letter-spacing:0.75px;color:#2c363e;font-weight:normal;">102,60</div>
<div class="t" style="left:946px;width:400px;text-align:center;top:489px;font-size:13px;letter-spacing:0.75px;color:#2c363e;font-weight:normal;">17.01.2019</div>
<svg style="position:absolute;left:1366px;top:489px" width="132" height="16" viewBox="0 0 132 16">
<path d="M2.1 1.7 H7.5 L10.9 5.1 V12.6 Q10.9 13 10.5 13 H2.5 Q2.1 13 2.1 12.6 Z" fill="none" stroke="#d4d4d4" stroke-width="1.2"/><path d="M7.2 1.2 L11.4 5.4 H7.2 Z" fill="#d4d4d4"/>
<circle cx="25.5" cy="7.35" r="5.65" fill="none" stroke="#111" stroke-width="1.5"/><path d="M27.35 5.95 A2.45 2.55 0 1 0 27.35 9.05 L26.05 8.45 A0.8 1.05 0 1 1 26.05 6.55 Z" fill="#111"/>
<circle cx="45.3" cy="7.6" r="2.35" fill="none" stroke="#d4d4d4" stroke-width="1.15"/><path d="M47.65 5 V9.3 Q47.65 10.9 49.1 10.9 Q51 10.9 51 7.6 A5.55 5.55 0 1 0 48.3 12.4 L48.9 12.9" fill="none" stroke="#d4d4d4" stroke-width="1.15"/>
<rect x="59.5" y="2.5" width="10" height="10" fill="none" stroke="#d6d6d6" stroke-width="1.1"/><rect x="61.3" y="4.4" width="1.4" height="1.2" fill="#e2e2e2"/><rect x="61.3" y="6.9" width="1.4" height="1.2" fill="#e2e2e2"/><rect x="61.3" y="9.4" width="1.4" height="1.2" fill="#e2e2e2"/><rect x="63.8" y="4.4" width="4" height="1.2" fill="#e2e2e2"/><rect x="63.8" y="6.9" width="4" height="1.2" fill="#e2e2e2"/><rect x="63.8" y="9.4" width="4" height="1.2" fill="#e2e2e2"/>
<rect x="77.6" y="3.1" width="9.6" height="9.8" rx="1" fill="none" stroke="#d6d6d6" stroke-width="1.3"/><path d="M80.4 8.6 Q83.5 8.3 84.3 6.3 Q84.6 5 83.4 5 Q81.2 5.1 80.5 8.2 Q80.2 10.6 82.2 10.6 Q83.3 10.5 84 9.8" fill="none" stroke="#d8d8d8" stroke-width="0.8"/>
<path d="M102.4 4.6 V10.4 A1.1 1.1 0 0 0 104.6 10.4 V3.3 A1.9 1.9 0 0 0 100.8 3.3 V11 A2.9 2.9 0 0 0 106.6 11 V4.4" fill="none" stroke="#dcdcdc" stroke-width="1"/>
<path d="M116.7 10.9 V3 Q116.7 1.6 118.1 1.6 H125" fill="none" stroke="#111" stroke-width="1.55"/><path d="M119.6 3.8 H124.3 L127.4 6.9 V13.1 Q127.4 13.7 126.8 13.7 H120.2 Q119.6 13.7 119.6 13.1 Z" fill="none" stroke="#111" stroke-width="1.6"/><path d="M123.9 3.4 L127.8 7.3 H123.9 Z" fill="#111"/>
</svg>
<div style="position:absolute;left:23px;top:524px;width:13px;height:13px;border:1px solid #c4c9cc;border-radius:2px;background:#f8f8f8"></div>
<div class="t" style="left:55px;top:524px;font-size:13px;letter-spacing:0.75px;color:#2c363e;font-weight:normal;">1024</div>
<div class="t" style="left:167.5px;top:524px;font-size:13px;letter-spacing:0.75px;color:#2c363e;font-weight:normal;">A</div>
<div class="t" style="left:74.5px;width:400px;text-align:center;top:524px;font-size:13px;letter-spacing:0.75px;color:#2c363e;font-weight:normal;">10</div>
<div class="t" style="left:348.5px;top:524px;font-size:13px;letter-spacing:0.75px;color:#2c363e;font-weight:normal;">1024001</div>
<div class="t" style="left:488px;top:524px;font-size:13px;letter-spacing:0.75px;color:#2c363e;font-weight:normal;">01.06.2018</div>
<div style="position:absolute;left:632px;top:525px;width:10px;height:10px;border-radius:50%;background:#f0b84a"></div>
<div class="t" style="left:651px;top:524px;font-size:13px;letter-spacing:0.75px;color:#2c363e;font-weight:normal;">Ej bokförda</div>
<div class="t" style="right:601.75px;top:524px;font-size:13px;letter-spacing:0.75px;color:#2c363e;font-weight:normal;">10,26</div>
<div class="t" style="right:461.25px;top:524px;font-size:13px;letter-spacing:0.75px;color:#2c363e;font-weight:normal;">10,26</div>
<div class="t" style="left:946px;width:400px;text-align:center;top:524px;font-size:13px;letter-spacing:0.75px;color:#2c363e;font-weight:normal;">01.06.2018</div>
<svg style="position:absolute;left:1366px;top:524px" width="132" height="16" viewBox="0 0 132 16">
<path d="M2.1 1.7 H7.5 L10.9 5.1 V12.6 Q10.9 13 10.5 13 H2.5 Q2.1 13 2.1 12.6 Z" fill="none" stroke="#d4d4d4" stroke-width="1.2"/><path d="M7.2 1.2 L11.4 5.4 H7.2 Z" fill="#d4d4d4"/>
<circle cx="25.5" cy="7.35" r="5.65" fill="none" stroke="#111" stroke-width="1.5"/><path d="M27.35 5.95 A2.45 2.55 0 1 0 27.35 9.05 L26.05 8.45 A0.8 1.05 0 1 1 26.05 6.55 Z" fill="#111"/>
<circle cx="45.3" cy="7.6" r="2.35" fill="none" stroke="#d4d4d4" stroke-width="1.15"/><path d="M47.65 5 V9.3 Q47.65 10.9 49.1 10.9 Q51 10.9 51 7.6 A5.55 5.55 0 1 0 48.3 12.4 L48.9 12.9" fill="none" stroke="#d4d4d4" stroke-width="1.15"/>
<rect x="59.5" y="2.5" width="10" height="10" fill="none" stroke="#d6d6d6" stroke-width="1.1"/><rect x="61.3" y="4.4" width="1.4" height="1.2" fill="#e2e2e2"/><rect x="61.3" y="6.9" width="1.4" height="1.2" fill="#e2e2e2"/><rect x="61.3" y="9.4" width="1.4" height="1.2" fill="#e2e2e2"/><rect x="63.8" y="4.4" width="4" height="1.2" fill="#e2e2e2"/><rect x="63.8" y="6.9" width="4" height="1.2" fill="#e2e2e2"/><rect x="63.8" y="9.4" width="4" height="1.2" fill="#e2e2e2"/>
<rect x="77.6" y="3.1" width="9.6" height="9.8" rx="1" fill="none" stroke="#d6d6d6" stroke-width="1.3"/><path d="M80.4 8.6 Q83.5 8.3 84.3 6.3 Q84.6 5 83.4 5 Q81.2 5.1 80.5 8.2 Q80.2 10.6 82.2 10.6 Q83.3 10.5 84 9.8" fill="none" stroke="#d8d8d8" stroke-width="0.8"/>
<path d="M102.4 4.6 V10.4 A1.1 1.1 0 0 0 104.6 10.4 V3.3 A1.9 1.9 0 0 0 100.8 3.3 V11 A2.9 2.9 0 0 0 106.6 11 V4.4" fill="none" stroke="#dcdcdc" stroke-width="1"/>
<path d="M116.7 10.9 V3 Q116.7 1.6 118.1 1.6 H125" fill="none" stroke="#111" stroke-width="1.55"/><path d="M119.6 3.8 H124.3 L127.4 6.9 V13.1 Q127.4 13.7 126.8 13.7 H120.2 Q119.6 13.7 119.6 13.1 Z" fill="none" stroke="#111" stroke-width="1.6"/><path d="M123.9 3.4 L127.8 7.3 H123.9 Z" fill="#111"/>
</svg>
<div style="position:absolute;left:23px;top:559px;width:13px;height:13px;border:1px solid #c4c9cc;border-radius:2px;background:#f8f8f8"></div>
<div class="t" style="left:55px;top:559px;font-size:13px;letter-spacing:0.75px;color:#2c363e;font-weight:normal;">1023</div>
<div class="t" style="left:167.5px;top:559px;font-size:13px;letter-spacing:0.75px;color:#2c363e;font-weight:normal;">A</div>
<div class="t" style="left:74.5px;width:400px;text-align:center;top:559px;font-size:13px;letter-spacing:0.75px;color:#2c363e;font-weight:normal;">10</div>
<div class="t" style="left:348.5px;top:559px;font-size:13px;letter-spacing:0.75px;color:#2c363e;font-weight:normal;">1023002</div>
<div class="t" style="left:488px;top:559px;font-size:13px;letter-spacing:0.75px;color:#2c363e;font-weight:normal;">01.06.2018</div>
<div style="position:absolute;left:632px;top:560px;width:10px;height:10px;border-radius:50%;background:#f0b84a"></div>
<div class="t" style="left:651px;top:559px;font-size:13px;letter-spacing:0.75px;color:#2c363e;font-weight:normal;">Ej bokförda</div>
<div class="t" style="right:601.75px;top:559px;font-size:13px;letter-spacing:0.75px;color:#2c363e;font-weight:normal;">10,26</div>
<div class="t" style="right:461.25px;top:559px;font-size:13px;letter-spacing:0.75px;color:#2c363e;font-weight:normal;">10,26</div>
<div class="t" style="left:946px;width:400px;text-align:center;top:559px;font-size:13px;letter-spacing:0.75px;color:#2c363e;font-weight:normal;">01.06.2018</div>
<svg style="position:absolute;left:1366px;top:559px" width="132" height="16" viewBox="0 0 132 16">
<path d="M2.1 1.7 H7.5 L10.9 5.1 V12.6 Q10.9 13 10.5 13 H2.5 Q2.1 13 2.1 12.6 Z" fill="none" stroke="#d4d4d4" stroke-width="1.2"/><path d="M7.2 1.2 L11.4 5.4 H7.2 Z" fill="#d4d4d4"/>
<circle cx="25.5" cy="7.35" r="5.65" fill="none" stroke="#111" stroke-width="1.5"/><path d="M27.35 5.95 A2.45 2.55 0 1 0 27.35 9.05 L26.05 8.45 A0.8 1.05 0 1 1 26.05 6.55 Z" fill="#111"/>
<circle cx="45.3" cy="7.6" r="2.35" fill="none" stroke="#d4d4d4" stroke-width="1.15"/><path d="M47.65 5 V9.3 Q47.65 10.9 49.1 10.9 Q51 10.9 51 7.6 A5.55 5.55 0 1 0 48.3 12.4 L48.9 12.9" fill="none" stroke="#d4d4d4" stroke-width="1.15"/>
<rect x="59.5" y="2.5" width="10" height="10" fill="none" stroke="#d6d6d6" stroke-width="1.1"/><rect x="61.3" y="4.4" width="1.4" height="1.2" fill="#e2e2e2"/><rect x="61.3" y="6.9" width="1.4" height="1.2" fill="#e2e2e2"/><rect x="61.3" y="9.4" width="1.4" height="1.2" fill="#e2e2e2"/><rect x="63.8" y="4.4" width="4" height="1.2" fill="#e2e2e2"/><rect x="63.8" y="6.9" width="4" height="1.2" fill="#e2e2e2"/><rect x="63.8" y="9.4" width="4" height="1.2" fill="#e2e2e2"/>
<rect x="77.6" y="3.1" width="9.6" height="9.8" rx="1" fill="none" stroke="#d6d6d6" stroke-width="1.3"/><path d="M80.4 8.6 Q83.5 8.3 84.3 6.3 Q84.6 5 83.4 5 Q81.2 5.1 80.5 8.2 Q80.2 10.6 82.2 10.6 Q83.3 10.5 84 9.8" fill="none" stroke="#d8d8d8" stroke-width="0.8"/>
<path d="M102.4 4.6 V10.4 A1.1 1.1 0 0 0 104.6 10.4 V3.3 A1.9 1.9 0 0 0 100.8 3.3 V11 A2.9 2.9 0 0 0 106.6 11 V4.4" fill="none" stroke="#dcdcdc" stroke-width="1"/>
<path d="M116.7 10.9 V3 Q116.7 1.6 118.1 1.6 H125" fill="none" stroke="#111" stroke-width="1.55"/><path d="M119.6 3.8 H124.3 L127.4 6.9 V13.1 Q127.4 13.7 126.8 13.7 H120.2 Q119.6 13.7 119.6 13.1 Z" fill="none" stroke="#111" stroke-width="1.6"/><path d="M123.9 3.4 L127.8 7.3 H123.9 Z" fill="#111"/>
</svg>
<div style="position:absolute;left:23px;top:594px;width:13px;height:13px;border:1px solid #c4c9cc;border-radius:2px;background:#f8f8f8"></div>
<div class="t" style="left:55px;top:594px;font-size:13px;letter-spacing:0.75px;color:#2c363e;font-weight:normal;">1022</div>
<div class="t" style="left:167.5px;top:594px;font-size:13px;letter-spacing:0.75px;color:#2c363e;font-weight:normal;">A</div>
<div class="t" style="left:74.5px;width:400px;text-align:center;top:594px;font-size:13px;letter-spacing:0.75px;color:#2c363e;font-weight:normal;">10</div>
<div class="t" style="left:348.5px;top:594px;font-size:13px;letter-spacing:0.75px;color:#2c363e;font-weight:normal;">1022003</div>
<div class="t" style="left:488px;top:594px;font-size:13px;letter-spacing:0.75px;color:#2c363e;font-weight:normal;">01.06.2018</div>
<div style="position:absolute;left:632px;top:595px;width:10px;height:10px;border-radius:50%;background:#f0b84a"></div>
<div class="t" style="left:651px;top:594px;font-size:13px;letter-spacing:0.75px;color:#2c363e;font-weight:normal;">Ej bokförda</div>
<div class="t" style="right:601.75px;top:594px;font-size:13px;letter-spacing:0.75px;color:#2c363e;font-weight:normal;">10,26</div>
<div class="t" style="right:461.25px;top:594px;font-size:13px;letter-spacing:0.75px;color:#2c363e;font-weight:normal;">10,26</div>
<div class="t" style="left:946px;width:400px;text-align:center;top:594px;font-size:13px;letter-spacing:0.75px;color:#2c363e;font-weight:normal;">01.06.2018</div>
<svg style="position:absolute;left:1366px;top:594px" width="132" height="16" viewBox="0 0 132 16">
<path d="M2.1 1.7 H7.5 L10.9 5.1 V12.6 Q10.9 13 10.5 13 H2.5 Q2.1 13 2.1 12.6 Z" fill="none" stroke="#d4d4d4" stroke-width="1.2"/><path d="M7.2 1.2 L11.4 5.4 H7.2 Z" fill="#d4d4d4"/>
<circle cx="25.5" cy="7.35" r="5.65" fill="none" stroke="#111" stroke-width="1.5"/><path d="M27.35 5.95 A2.45 2.55 0 1 0 27.35 9.05 L26.05 8.45 A0.8 1.05 0 1 1 26.05 6.55 Z" fill="#111"/>
<circle cx="45.3" cy="7.6" r="2.35" fill="none" stroke="#d4d4d4" stroke-width="1.15"/><path d="M47.65 5 V9.3 Q47.65 10.9 49.1 10.9 Q51 10.9 51 7.6 A5.55 5.55 0 1 0 48.3 12.4 L48.9 12.9" fill="none" stroke="#d4d4d4" stroke-width="1.15"/>
<rect x="59.5" y="2.5" width="10" height="10" fill="none" stroke="#d6d6d6" stroke-width="1.1"/><rect x="61.3" y="4.4" width="1.4" height="1.2" fill="#e2e2e2"/><rect x="61.3" y="6.9" width="1.4" height="1.2" fill="#e2e2e2"/><rect x="61.3" y="9.4" width="1.4" height="1.2" fill="#e2e2e2"/><rect x="63.8" y="4.4" width="4" height="1.2" fill="#e2e2e2"/><rect x="63.8" y="6.9" width="4" height="1.2" fill="#e2e2e2"/><rect x="63.8" y="9.4" width="4" height="1.2" fill="#e2e2e2"/>
<rect x="77.6" y="3.1" width="9.6" height="9.8" rx="1" fill="none" stroke="#d6d6d6" stroke-width="1.3"/><path d="M80.4 8.6 Q83.5 8.3 84.3 6.3 Q84.6 5 83.4 5 Q81.2 5.1 80.5 8.2 Q80.2 10.6 82.2 10.6 Q83.3 10.5 84 9.8" fill="none" stroke="#d8d8d8" stroke-width="0.8"/>
<path d="M102.4 4.6 V10.4 A1.1 1.1 0 0 0 104.6 10.4 V3.3 A1.9 1.9 0 0 0 100.8 3.3 V11 A2.9 2.9 0 0 0 106.6 11 V4.4" fill="none" stroke="#dcdcdc" stroke-width="1"/>
<path d="M116.7 10.9 V3 Q116.7 1.6 118.1 1.6 H125" fill="none" stroke="#111" stroke-width="1.55"/><path d="M119.6 3.8 H124.3 L127.4 6.9 V13.1 Q127.4 13.7 126.8 13.7 H120.2 Q119.6 13.7 119.6 13.1 Z" fill="none" stroke="#111" stroke-width="1.6"/><path d="M123.9 3.4 L127.8 7.3 H123.9 Z" fill="#111"/>
</svg>
<div style="position:absolute;left:23px;top:629px;width:13px;height:13px;border:1px solid #c4c9cc;border-radius:2px;background:#f8f8f8"></div>
<div class="t" style="left:55px;top:629px;font-size:13px;letter-spacing:0.75px;color:#2c363e;font-weight:normal;">1021</div>
<div class="t" style="left:167.5px;top:629px;font-size:13px;letter-spacing:0.75px;color:#2c363e;font-weight:normal;">A</div>
<div class="t" style="left:74.5px;width:400px;text-align:center;top:629px;font-size:13px;letter-spacing:0.75px;color:#2c363e;font-weight:normal;">10</div>
<div class="t" style="left:348.5px;top:629px;font-size:13px;letter-spacing:0.75px;color:#2c363e;font-weight:normal;">1021004</div>
<div class="t" style="left:488px;top:629px;font-size:13px;letter-spacing:0.75px;color:#2c363e;font-weight:normal;">01.06.2018</div>
<div style="position:absolute;left:632px;top:630px;width:10px;height:10px;border-radius:50%;background:#f0b84a"></div>
<div class="t" style="left:651px;top:629px;font-size:13px;letter-spacing:0.75px;color:#2c363e;font-weight:normal;">Ej bokförda</div>
<div class="t" style="right:601.75px;top:629px;font-size:13px;letter-spacing:0.75px;color:#2c363e;font-weight:normal;">10,26</div>
<div class="t" style="right:461.25px;top:629px;font-size:13px;letter-spacing:0.75px;color:#2c363e;font-weight:normal;">10,26</div>
<div class="t" style="left:946px;width:400px;text-align:center;top:629px;font-size:13px;letter-spacing:0.75px;color:#2c363e;font-weight:normal;">01.06.2018</div>
<svg style="position:absolute;left:1366px;top:629px" width="132" height="16" viewBox="0 0 132 16">
<path d="M2.1 1.7 H7.5 L10.9 5.1 V12.6 Q10.9 13 10.5 13 H2.5 Q2.1 13 2.1 12.6 Z" fill="none" stroke="#d4d4d4" stroke-width="1.2"/><path d="M7.2 1.2 L11.4 5.4 H7.2 Z" fill="#d4d4d4"/>
<circle cx="25.5" cy="7.35" r="5.65" fill="none" stroke="#111" stroke-width="1.5"/><path d="M27.35 5.95 A2.45 2.55 0 1 0 27.35 9.05 L26.05 8.45 A0.8 1.05 0 1 1 26.05 6.55 Z" fill="#111"/>
<circle cx="45.3" cy="7.6" r="2.35" fill="none" stroke="#d4d4d4" stroke-width="1.15"/><path d="M47.65 5 V9.3 Q47.65 10.9 49.1 10.9 Q51 10.9 51 7.6 A5.55 5.55 0 1 0 48.3 12.4 L48.9 12.9" fill="none" stroke="#d4d4d4" stroke-width="1.15"/>
<rect x="59.5" y="2.5" width="10" height="10" fill="none" stroke="#d6d6d6" stroke-width="1.1"/><rect x="61.3" y="4.4" width="1.4" height="1.2" fill="#e2e2e2"/><rect x="61.3" y="6.9" width="1.4" height="1.2" fill="#e2e2e2"/><rect x="61.3" y="9.4" width="1.4" height="1.2" fill="#e2e2e2"/><rect x="63.8" y="4.4" width="4" height="1.2" fill="#e2e2e2"/><rect x="63.8" y="6.9" width="4" height="1.2" fill="#e2e2e2"/><rect x="63.8" y="9.4" width="4" height="1.2" fill="#e2e2e2"/>
<rect x="77.6" y="3.1" width="9.6" height="9.8" rx="1" fill="none" stroke="#d6d6d6" stroke-width="1.3"/><path d="M80.4 8.6 Q83.5 8.3 84.3 6.3 Q84.6 5 83.4 5 Q81.2 5.1 80.5 8.2 Q80.2 10.6 82.2 10.6 Q83.3 10.5 84 9.8" fill="none" stroke="#d8d8d8" stroke-width="0.8"/>
<path d="M102.4 4.6 V10.4 A1.1 1.1 0 0 0 104.6 10.4 V3.3 A1.9 1.9 0 0 0 100.8 3.3 V11 A2.9 2.9 0 0 0 106.6 11 V4.4" fill="none" stroke="#dcdcdc" stroke-width="1"/>
<path d="M116.7 10.9 V3 Q116.7 1.6 118.1 1.6 H125" fill="none" stroke="#111" stroke-width="1.55"/><path d="M119.6 3.8 H124.3 L127.4 6.9 V13.1 Q127.4 13.7 126.8 13.7 H120.2 Q119.6 13.7 119.6 13.1 Z" fill="none" stroke="#111" stroke-width="1.6"/><path d="M123.9 3.4 L127.8 7.3 H123.9 Z" fill="#111"/>
</svg>
<div style="position:absolute;left:23px;top:664px;width:13px;height:13px;border:1px solid #c4c9cc;border-radius:2px;background:#f8f8f8"></div>
<div class="t" style="left:55px;top:664px;font-size:13px;letter-spacing:0.75px;color:#2c363e;font-weight:normal;">1020</div>
<div class="t" style="left:167.5px;top:664px;font-size:13px;letter-spacing:0.75px;color:#2c363e;font-weight:normal;">A</div>
<div class="t" style="left:74.5px;width:400px;text-align:center;top:664px;font-size:13px;letter-spacing:0.75px;color:#2c363e;font-weight:normal;">10</div>
<div class="t" style="left:348.5px;top:664px;font-size:13px;letter-spacing:0.75px;color:#2c363e;font-weight:normal;">1020005</div>
<div class="t" style="left:488px;top:664px;font-size:13px;letter-spacing:0.75px;color:#2c363e;font-weight:normal;">01.06.2018</div>
<div style="position:absolute;left:632px;top:665px;width:10px;height:10px;border-radius:50%;background:#f0b84a"></div>
<div class="t" style="left:651px;top:664px;font-size:13px;letter-spacing:0.75px;color:#2c363e;font-weight:normal;">Ej bokförda</div>
<div class="t" style="right:601.75px;top:664px;font-size:13px;letter-spacing:0.75px;color:#2c363e;font-weight:normal;">10,26</div>
<div class="t" style="right:461.25px;top:664px;font-size:13px;letter-spacing:0.75px;color:#2c363e;font-weight:normal;">10,26</div>
<div class="t" style="left:946px;width:400px;text-align:center;top:664px;font-size:13px;letter-spacing:0.75px;color:#2c363e;font-weight:normal;">01.06.2018</div>
<svg style="position:absolute;left:1366px;top:664px" width="132" height="16" viewBox="0 0 132 16">
<path d="M2.1 1.7 H7.5 L10.9 5.1 V12.6 Q10.9 13 10.5 13 H2.5 Q2.1 13 2.1 12.6 Z" fill="none" stroke="#d4d4d4" stroke-width="1.2"/><path d="M7.2 1.2 L11.4 5.4 H7.2 Z" fill="#d4d4d4"/>
<circle cx="25.5" cy="7.35" r="5.65" fill="none" stroke="#111" stroke-width="1.5"/><path d="M27.35 5.95 A2.45 2.55 0 1 0 27.35 9.05 L26.05 8.45 A0.8 1.05 0 1 1 26.05 6.55 Z" fill="#111"/>
<circle cx="45.3" cy="7.6" r="2.35" fill="none" stroke="#d4d4d4" stroke-width="1.15"/><path d="M47.65 5 V9.3 Q47.65 10.9 49.1 10.9 Q51 10.9 51 7.6 A5.55 5.55 0 1 0 48.3 12.4 L48.9 12.9" fill="none" stroke="#d4d4d4" stroke-width="1.15"/>
<rect x="59.5" y="2.5" width="10" height="10" fill="none" stroke="#d6d6d6" stroke-width="1.1"/><rect x="61.3" y="4.4" width="1.4" height="1.2" fill="#e2e2e2"/><rect x="61.3" y="6.9" width="1.4" height="1.2" fill="#e2e2e2"/><rect x="61.3" y="9.4" width="1.4" height="1.2" fill="#e2e2e2"/><rect x="63.8" y="4.4" width="4" height="1.2" fill="#e2e2e2"/><rect x="63.8" y="6.9" width="4" height="1.2" fill="#e2e2e2"/><rect x="63.8" y="9.4" width="4" height="1.2" fill="#e2e2e2"/>
<rect x="77.6" y="3.1" width="9.6" height="9.8" rx="1" fill="none" stroke="#d6d6d6" stroke-width="1.3"/><path d="M80.4 8.6 Q83.5 8.3 84.3 6.3 Q84.6 5 83.4 5 Q81.2 5.1 80.5 8.2 Q80.2 10.6 82.2 10.6 Q83.3 10.5 84 9.8" fill="none" stroke="#d8d8d8" stroke-width="0.8"/>
<path d="M102.4 4.6 V10.4 A1.1 1.1 0 0 0 104.6 10.4 V3.3 A1.9 1.9 0 0 0 100.8 3.3 V11 A2.9 2.9 0 0 0 106.6 11 V4.4" fill="none" stroke="#dcdcdc" stroke-width="1"/>
<path d="M116.7 10.9 V3 Q116.7 1.6 118.1 1.6 H125" fill="none" stroke="#111" stroke-width="1.55"/><path d="M119.6 3.8 H124.3 L127.4 6.9 V13.1 Q127.4 13.7 126.8 13.7 H120.2 Q119.6 13.7 119.6 13.1 Z" fill="none" stroke="#111" stroke-width="1.6"/><path d="M123.9 3.4 L127.8 7.3 H123.9 Z" fill="#111"/>
</svg>
<div style="position:absolute;left:23px;top:699px;width:13px;height:13px;border:1px solid #c4c9cc;border-radius:2px;background:#f8f8f8"></div>
<div class="t" style="left:55px;top:699px;font-size:13px;letter-spacing:0.75px;color:#2c363e;font-weight:normal;">1019</div>
<div class="t" style="left:167.5px;top:699px;font-size:13px;letter-spacing:0.75px;color:#2c363e;font-weight:normal;">A</div>
<div class="t" style="left:74.5px;width:400px;text-align:center;top:699px;font-size:13px;letter-spacing:0.75px;color:#2c363e;font-weight:normal;">3307</div>
<div class="t" style="left:348.5px;top:699px;font-size:13px;letter-spacing:0.75px;color:#2c363e;font-weight:normal;">1019003</div>
<div class="t" style="left:488px;top:699px;font-size:13px;letter-spacing:0.75px;color:#2c363e;font-weight:normal;">01.06.2018</div>
<div style="position:absolute;left:632px;top:700px;width:10px;height:10px;border-radius:50%;background:#f0b84a"></div>
<div class="t" style="left:651px;top:699px;font-size:13px;letter-spacing:0.75px;color:#2c363e;font-weight:normal;">Ej bokförda</div>
<div class="t" style="right:601.75px;top:699px;font-size:13px;letter-spacing:0.75px;color:#2c363e;font-weight:normal;">51,30</div>
<div class="t" style="right:461.25px;top:699px;font-size:13px;letter-spacing:0.75px;color:#2c363e;font-weight:normal;">51,30</div>
<div class="t" style="left:946px;width:400px;text-align:center;top:699px;font-size:13px;letter-spacing:0.75px;color:#2c363e;font-weight:normal;">11.06.2018</div>
<svg style="position:absolute;left:1366px;top:699px" width="132" height="16" viewBox="0 0 132 16">
<path d="M2.1 1.7 H7.5 L10.9 5.1 V12.6 Q10.9 13 10.5 13 H2.5 Q2.1 13 2.1 12.6 Z" fill="none" stroke="#d4d4d4" stroke-width="1.2"/><path d="M7.2 1.2 L11.4 5.4 H7.2 Z" fill="#d4d4d4"/>
<circle cx="25.5" cy="7.35" r="5.65" fill="none" stroke="#111" stroke-width="1.5"/><path d="M27.35 5.95 A2.45 2.55 0 1 0 27.35 9.05 L26.05 8.45 A0.8 1.05 0 1 1 26.05 6.55 Z" fill="#111"/>
<circle cx="45.3" cy="7.6" r="2.35" fill="none" stroke="#d4d4d4" stroke-width="1.15"/><path d="M47.65 5 V9.3 Q47.65 10.9 49.1 10.9 Q51 10.9 51 7.6 A5.55 5.55 0 1 0 48.3 12.4 L48.9 12.9" fill="none" stroke="#d4d4d4" stroke-width="1.15"/>
<rect x="59.5" y="2.5" width="10" height="10" fill="none" stroke="#d6d6d6" stroke-width="1.1"/><rect x="61.3" y="4.4" width="1.4" height="1.2" fill="#e2e2e2"/><rect x="61.3" y="6.9" width="1.4" height="1.2" fill="#e2e2e2"/><rect x="61.3" y="9.4" width="1.4" height="1.2" fill="#e2e2e2"/><rect x="63.8" y="4.4" width="4" height="1.2" fill="#e2e2e2"/><rect x="63.8" y="6.9" width="4" height="1.2" fill="#e2e2e2"/><rect x="63.8" y="9.4" width="4" height="1.2" fill="#e2e2e2"/>
<rect x="77.6" y="3.1" width="9.6" height="9.8" rx="1" fill="none" stroke="#d6d6d6" stroke-width="1.3"/><path d="M80.4 8.6 Q83.5 8.3 84.3 6.3 Q84.6 5 83.4 5 Q81.2 5.1 80.5 8.2 Q80.2 10.6 82.2 10.6 Q83.3 10.5 84 9.8" fill="none" stroke="#d8d8d8" stroke-width="0.8"/>
<path d="M102.4 4.6 V10.4 A1.1 1.1 0 0 0 104.6 10.4 V3.3 A1.9 1.9 0 0 0 100.8 3.3 V11 A2.9 2.9 0 0 0 106.6 11 V4.4" fill="none" stroke="#dcdcdc" stroke-width="1"/>
<path d="M116.7 10.9 V3 Q116.7 1.6 118.1 1.6 H125" fill="none" stroke="#111" stroke-width="1.55"/><path d="M119.6 3.8 H124.3 L127.4 6.9 V13.1 Q127.4 13.7 126.8 13.7 H120.2 Q119.6 13.7 119.6 13.1 Z" fill="none" stroke="#111" stroke-width="1.6"/><path d="M123.9 3.4 L127.8 7.3 H123.9 Z" fill="#111"/>
</svg>
<div style="position:absolute;left:23px;top:734px;width:13px;height:13px;border:1px solid #c4c9cc;border-radius:2px;background:#f8f8f8"></div>
<div class="t" style="left:55px;top:734px;font-size:13px;letter-spacing:0.75px;color:#2c363e;font-weight:normal;">1018</div>
<div class="t" style="left:167.5px;top:734px;font-size:13px;letter-spacing:0.75px;color:#2c363e;font-weight:normal;">A</div>
<div class="t" style="left:74.5px;width:400px;text-align:center;top:734px;font-size:13px;letter-spacing:0.75px;color:#2c363e;font-weight:normal;">3307</div>
<div class="t" style="left:348.5px;top:734px;font-size:13px;letter-spacing:0.75px;color:#2c363e;font-weight:normal;">1018004</div>
<div class="t" style="left:488px;top:734px;font-size:13px;letter-spacing:0.75px;color:#2c363e;font-weight:normal;">01.06.2018</div>
<div style="position:absolute;left:632px;top:735px;width:10px;height:10px;border-radius:50%;background:#f0b84a"></div>
<div class="t" style="left:651px;top:734px;font-size:13px;letter-spacing:0.75px;color:#2c363e;font-weight:normal;">Ej bokförda</div>
<div class="t" style="right:601.75px;top:734px;font-size:13px;letter-spacing:0.75px;color:#2c363e;font-weight:normal;">51,30</div>
<div class="t" style="right:461.25px;top:734px;font-size:13px;letter-spacing:0.75px;color:#2c363e;font-weight:normal;">51,30</div>
<div class="t" style="left:946px;width:400px;text-align:center;top:734px;font-size:13px;letter-spacing:0.75px;color:#2c363e;font-weight:normal;">11.06.2018</div>
<svg style="position:absolute;left:1366px;top:734px" width="132" height="16" viewBox="0 0 132 16">
<path d="M2.1 1.7 H7.5 L10.9 5.1 V12.6 Q10.9 13 10.5 13 H2.5 Q2.1 13 2.1 12.6 Z" fill="none" stroke="#d4d4d4" stroke-width="1.2"/><path d="M7.2 1.2 L11.4 5.4 H7.2 Z" fill="#d4d4d4"/>
<circle cx="25.5" cy="7.35" r="5.65" fill="none" stroke="#111" stroke-width="1.5"/><path d="M27.35 5.95 A2.45 2.55 0 1 0 27.35 9.05 L26.05 8.45 A0.8 1.05 0 1 1 26.05 6.55 Z" fill="#111"/>
<circle cx="45.3" cy="7.6" r="2.35" fill="none" stroke="#d4d4d4" stroke-width="1.15"/><path d="M47.65 5 V9.3 Q47.65 10.9 49.1 10.9 Q51 10.9 51 7.6 A5.55 5.55 0 1 0 48.3 12.4 L48.9 12.9" fill="none" stroke="#d4d4d4" stroke-width="1.15"/>
<rect x="59.5" y="2.5" width="10" height="10" fill="none" stroke="#d6d6d6" stroke-width="1.1"/><rect x="61.3" y="4.4" width="1.4" height="1.2" fill="#e2e2e2"/><rect x="61.3" y="6.9" width="1.4" height="1.2" fill="#e2e2e2"/><rect x="61.3" y="9.4" width="1.4" height="1.2" fill="#e2e2e2"/><rect x="63.8" y="4.4" width="4" height="1.2" fill="#e2e2e2"/><rect x="63.8" y="6.9" width="4" height="1.2" fill="#e2e2e2"/><rect x="63.8" y="9.4" width="4" height="1.2" fill="#e2e2e2"/>
<rect x="77.6" y="3.1" width="9.6" height="9.8" rx="1" fill="none" stroke="#d6d6d6" stroke-width="1.3"/><path d="M80.4 8.6 Q83.5 8.3 84.3 6.3 Q84.6 5 83.4 5 Q81.2 5.1 80.5 8.2 Q80.2 10.6 82.2 10.6 Q83.3 10.5 84 9.8" fill="none" stroke="#d8d8d8" stroke-width="0.8"/>
<path d="M102.4 4.6 V10.4 A1.1 1.1 0 0 0 104.6 10.4 V3.3 A1.9 1.9 0 0 0 100.8 3.3 V11 A2.9 2.9 0 0 0 106.6 11 V4.4" fill="none" stroke="#dcdcdc" stroke-width="1"/>
<path d="M116.7 10.9 V3 Q116.7 1.6 118.1 1.6 H125" fill="none" stroke="#111" stroke-width="1.55"/><path d="M119.6 3.8 H124.3 L127.4 6.9 V13.1 Q127.4 13.7 126.8 13.7 H120.2 Q119.6 13.7 119.6 13.1 Z" fill="none" stroke="#111" stroke-width="1.6"/><path d="M123.9 3.4 L127.8 7.3 H123.9 Z" fill="#111"/>
</svg>
<div style="position:absolute;left:23px;top:769px;width:13px;height:13px;border:1px solid #c4c9cc;border-radius:2px;background:#f8f8f8"></div>
<div class="t" style="left:55px;top:769px;font-size:13px;letter-spacing:0.75px;color:#2c363e;font-weight:normal;">1017</div>
<div class="t" style="left:167.5px;top:769px;font-size:13px;letter-spacing:0.75px;color:#2c363e;font-weight:normal;">A</div>
<div class="t" style="left:74.5px;width:400px;text-align:center;top:769px;font-size:13px;letter-spacing:0.75px;color:#2c363e;font-weight:normal;">3307</div>
<div class="t" style="left:348.5px;top:769px;font-size:13px;letter-spacing:0.75px;color:#2c363e;font-weight:normal;">1017005</div>
<div class="t" style="left:488px;top:769px;font-size:13px;letter-spacing:0.75px;color:#2c363e;font-weight:normal;">01.06.2018</div>
<div style="position:absolute;left:632px;top:770px;width:10px;height:10px;border-radius:50%;background:#f0b84a"></div>
<div class="t" style="left:651px;top:769px;font-size:13px;letter-spacing:0.75px;color:#2c363e;font-weight:normal;">Ej bokförda</div>
<div class="t" style="right:601.75px;top:769px;font-size:13px;letter-spacing:0.75px;color:#2c363e;font-weight:normal;">51,30</div>
<div class="t" style="right:461.25px;top:769px;font-size:13px;letter-spacing:0.75px;color:#2c363e;font-weight:normal;">51,30</div>
<div class="t" style="left:946px;width:400px;text-align:center;top:769px;font-size:13px;letter-spacing:0.75px;color:#2c363e;font-weight:normal;">11.06.2018</div>
<svg style="position:absolute;left:1366px;top:769px" width="132" height="16" viewBox="0 0 132 16">
<path d="M2.1 1.7 H7.5 L10.9 5.1 V12.6 Q10.9 13 10.5 13 H2.5 Q2.1 13 2.1 12.6 Z" fill="none" stroke="#d4d4d4" stroke-width="1.2"/><path d="M7.2 1.2 L11.4 5.4 H7.2 Z" fill="#d4d4d4"/>
<circle cx="25.5" cy="7.35" r="5.65" fill="none" stroke="#111" stroke-width="1.5"/><path d="M27.35 5.95 A2.45 2.55 0 1 0 27.35 9.05 L26.05 8.45 A0.8 1.05 0 1 1 26.05 6.55 Z" fill="#111"/>
<circle cx="45.3" cy="7.6" r="2.35" fill="none" stroke="#d4d4d4" stroke-width="1.15"/><path d="M47.65 5 V9.3 Q47.65 10.9 49.1 10.9 Q51 10.9 51 7.6 A5.55 5.55 0 1 0 48.3 12.4 L48.9 12.9" fill="none" stroke="#d4d4d4" stroke-width="1.15"/>
<rect x="59.5" y="2.5" width="10" height="10" fill="none" stroke="#d6d6d6" stroke-width="1.1"/><rect x="61.3" y="4.4" width="1.4" height="1.2" fill="#e2e2e2"/><rect x="61.3" y="6.9" width="1.4" height="1.2" fill="#e2e2e2"/><rect x="61.3" y="9.4" width="1.4" height="1.2" fill="#e2e2e2"/><rect x="63.8" y="4.4" width="4" height="1.2" fill="#e2e2e2"/><rect x="63.8" y="6.9" width="4" height="1.2" fill="#e2e2e2"/><rect x="63.8" y="9.4" width="4" height="1.2" fill="#e2e2e2"/>
<rect x="77.6" y="3.1" width="9.6" height="9.8" rx="1" fill="none" stroke="#d6d6d6" stroke-width="1.3"/><path d="M80.4 8.6 Q83.5 8.3 84.3 6.3 Q84.6 5 83.4 5 Q81.2 5.1 80.5 8.2 Q80.2 10.6 82.2 10.6 Q83.3 10.5 84 9.8" fill="none" stroke="#d8d8d8" stroke-width="0.8"/>
<path d="M102.4 4.6 V10.4 A1.1 1.1 0 0 0 104.6 10.4 V3.3 A1.9 1.9 0 0 0 100.8 3.3 V11 A2.9 2.9 0 0 0 106.6 11 V4.4" fill="none" stroke="#dcdcdc" stroke-width="1"/>
<path d="M116.7 10.9 V3 Q116.7 1.6 118.1 1.6 H125" fill="none" stroke="#111" stroke-width="1.55"/><path d="M119.6 3.8 H124.3 L127.4 6.9 V13.1 Q127.4 13.7 126.8 13.7 H120.2 Q119.6 13.7 119.6 13.1 Z" fill="none" stroke="#111" stroke-width="1.6"/><path d="M123.9 3.4 L127.8 7.3 H123.9 Z" fill="#111"/>
</svg>
<div style="position:absolute;left:23px;top:804px;width:13px;height:13px;border:1px solid #c4c9cc;border-radius:2px;background:#f8f8f8"></div>
<div class="t" style="left:55px;top:804px;font-size:13px;letter-spacing:0.75px;color:#2c363e;font-weight:normal;">1016</div>
<div class="t" style="left:167.5px;top:804px;font-size:13px;letter-spacing:0.75px;color:#2c363e;font-weight:normal;">A</div>
<div class="t" style="left:74.5px;width:400px;text-align:center;top:804px;font-size:13px;letter-spacing:0.75px;color:#2c363e;font-weight:normal;">3307</div>
<div class="t" style="left:348.5px;top:804px;font-size:13px;letter-spacing:0.75px;color:#2c363e;font-weight:normal;">1016006</div>
<div class="t" style="left:488px;top:804px;font-size:13px;letter-spacing:0.75px;color:#2c363e;font-weight:normal;">01.06.2018</div>
<div style="position:absolute;left:632px;top:805px;width:10px;height:10px;border-radius:50%;background:#f0b84a"></div>
<div class="t" style="left:651px;top:804px;font-size:13px;letter-spacing:0.75px;color:#2c363e;font-weight:normal;">Ej bokförda</div>
<div class="t" style="right:601.75px;top:804px;font-size:13px;letter-spacing:0.75px;color:#2c363e;font-weight:normal;">51,30</div>
<div class="t" style="right:461.25px;top:804px;font-size:13px;letter-spacing:0.75px;color:#2c363e;font-weight:normal;">51,30</div>
<div class="t" style="left:946px;width:400px;text-align:center;top:804px;font-size:13px;letter-spacing:0.75px;color:#2c363e;font-weight:normal;">11.06.2018</div>
<svg style="position:absolute;left:1366px;top:804px" width="132" height="16" viewBox="0 0 132 16">
<path d="M2.1 1.7 H7.5 L10.9 5.1 V12.6 Q10.9 13 10.5 13 H2.5 Q2.1 13 2.1 12.6 Z" fill="none" stroke="#d4d4d4" stroke-width="1.2"/><path d="M7.2 1.2 L11.4 5.4 H7.2 Z" fill="#d4d4d4"/>
<circle cx="25.5" cy="7.35" r="5.65" fill="none" stroke="#111" stroke-width="1.5"/><path d="M27.35 5.95 A2.45 2.55 0 1 0 27.35 9.05 L26.05 8.45 A0.8 1.05 0 1 1 26.05 6.55 Z" fill="#111"/>
<circle cx="45.3" cy="7.6" r="2.35" fill="none" stroke="#d4d4d4" stroke-width="1.15"/><path d="M47.65 5 V9.3 Q47.65 10.9 49.1 10.9 Q51 10.9 51 7.6 A5.55 5.55 0 1 0 48.3 12.4 L48.9 12.9" fill="none" stroke="#d4d4d4" stroke-width="1.15"/>
<rect x="59.5" y="2.5" width="10" height="10" fill="none" stroke="#d6d6d6" stroke-width="1.1"/><rect x="61.3" y="4.4" width="1.4" height="1.2" fill="#e2e2e2"/><rect x="61.3" y="6.9" width="1.4" height="1.2" fill="#e2e2e2"/><rect x="61.3" y="9.4" width="1.4" height="1.2" fill="#e2e2e2"/><rect x="63.8" y="4.4" width="4" height="1.2" fill="#e2e2e2"/><rect x="63.8" y="6.9" width="4" height="1.2" fill="#e2e2e2"/><rect x="63.8" y="9.4" width="4" height="1.2" fill="#e2e2e2"/>
<rect x="77.6" y="3.1" width="9.6" height="9.8" rx="1" fill="none" stroke="#d6d6d6" stroke-width="1.3"/><path d="M80.4 8.6 Q83.5 8.3 84.3 6.3 Q84.6 5 83.4 5 Q81.2 5.1 80.5 8.2 Q80.2 10.6 82.2 10.6 Q83.3 10.5 84 9.8" fill="none" stroke="#d8d8d8" stroke-width="0.8"/>
<path d="M102.4 4.6 V10.4 A1.1 1.1 0 0 0 104.6 10.4 V3.3 A1.9 1.9 0 0 0 100.8 3.3 V11 A2.9 2.9 0 0 0 106.6 11 V4.4" fill="none" stroke="#dcdcdc" stroke-width="1"/>
<path d="M116.7 10.9 V3 Q116.7 1.6 118.1 1.6 H125" fill="none" stroke="#111" stroke-width="1.55"/><path d="M119.6 3.8 H124.3 L127.4 6.9 V13.1 Q127.4 13.7 126.8 13.7 H120.2 Q119.6 13.7 119.6 13.1 Z" fill="none" stroke="#111" stroke-width="1.6"/><path d="M123.9 3.4 L127.8 7.3 H123.9 Z" fill="#111"/>
</svg>
<div style="position:absolute;left:23px;top:839px;width:13px;height:13px;border:1px solid #c4c9cc;border-radius:2px;background:#f8f8f8"></div>
<div class="t" style="left:55px;top:839px;font-size:13px;letter-spacing:0.75px;color:#2c363e;font-weight:normal;">1015</div>
<div class="t" style="left:167.5px;top:839px;font-size:13px;letter-spacing:0.75px;color:#2c363e;font-weight:normal;">A</div>
<div class="t" style="left:74.5px;width:400px;text-align:center;top:839px;font-size:13px;letter-spacing:0.75px;color:#2c363e;font-weight:normal;">3307</div>
<div class="t" style="left:348.5px;top:839px;font-size:13px;letter-spacing:0.75px;color:#2c363e;font-weight:normal;">1015007</div>
<div class="t" style="left:488px;top:839px;font-size:13px;letter-spacing:0.75px;color:#2c363e;font-weight:normal;">01.06.2018</div>
<div style="position:absolute;left:632px;top:840px;width:10px;height:10px;border-radius:50%;background:#f0b84a"></div>
<div class="t" style="left:651px;top:839px;font-size:13px;letter-spacing:0.75px;color:#2c363e;font-weight:normal;">Ej bokförda</div>
<div class="t" style="right:601.75px;top:839px;font-size:13px;letter-spacing:0.75px;color:#2c363e;font-weight:normal;">51,30</div>
<div class="t" style="right:461.25px;top:839px;font-size:13px;letter-spacing:0.75px;color:#2c363e;font-weight:normal;">51,30</div>
<div class="t" style="left:946px;width:400px;text-align:center;top:839px;font-size:13px;letter-spacing:0.75px;color:#2c363e;font-weight:normal;">11.06.2018</div>
<svg style="position:absolute;left:1366px;top:839px" width="132" height="16" viewBox="0 0 132 16">
<path d="M2.1 1.7 H7.5 L10.9 5.1 V12.6 Q10.9 13 10.5 13 H2.5 Q2.1 13 2.1 12.6 Z" fill="none" stroke="#d4d4d4" stroke-width="1.2"/><path d="M7.2 1.2 L11.4 5.4 H7.2 Z" fill="#d4d4d4"/>
<circle cx="25.5" cy="7.35" r="5.65" fill="none" stroke="#111" stroke-width="1.5"/><path d="M27.35 5.95 A2.45 2.55 0 1 0 27.35 9.05 L26.05 8.45 A0.8 1.05 0 1 1 26.05 6.55 Z" fill="#111"/>
<circle cx="45.3" cy="7.6" r="2.35" fill="none" stroke="#d4d4d4" stroke-width="1.15"/><path d="M47.65 5 V9.3 Q47.65 10.9 49.1 10.9 Q51 10.9 51 7.6 A5.55 5.55 0 1 0 48.3 12.4 L48.9 12.9" fill="none" stroke="#d4d4d4" stroke-width="1.15"/>
<rect x="59.5" y="2.5" width="10" height="10" fill="none" stroke="#d6d6d6" stroke-width="1.1"/><rect x="61.3" y="4.4" width="1.4" height="1.2" fill="#e2e2e2"/><rect x="61.3" y="6.9" width="1.4" height="1.2" fill="#e2e2e2"/><rect x="61.3" y="9.4" width="1.4" height="1.2" fill="#e2e2e2"/><rect x="63.8" y="4.4" width="4" height="1.2" fill="#e2e2e2"/><rect x="63.8" y="6.9" width="4" height="1.2" fill="#e2e2e2"/><rect x="63.8" y="9.4" width="4" height="1.2" fill="#e2e2e2"/>
<rect x="77.6" y="3.1" width="9.6" height="9.8" rx="1" fill="none" stroke="#d6d6d6" stroke-width="1.3"/><path d="M80.4 8.6 Q83.5 8.3 84.3 6.3 Q84.6 5 83.4 5 Q81.2 5.1 80.5 8.2 Q80.2 10.6 82.2 10.6 Q83.3 10.5 84 9.8" fill="none" stroke="#d8d8d8" stroke-width="0.8"/>
<path d="M102.4 4.6 V10.4 A1.1 1.1 0 0 0 104.6 10.4 V3.3 A1.9 1.9 0 0 0 100.8 3.3 V11 A2.9 2.9 0 0 0 106.6 11 V4.4" fill="none" stroke="#dcdcdc" stroke-width="1"/>
<path d="M116.7 10.9 V3 Q116.7 1.6 118.1 1.6 H125" fill="none" stroke="#111" stroke-width="1.55"/><path d="M119.6 3.8 H124.3 L127.4 6.9 V13.1 Q127.4 13.7 126.8 13.7 H120.2 Q119.6 13.7 119.6 13.1 Z" fill="none" stroke="#111" stroke-width="1.6"/><path d="M123.9 3.4 L127.8 7.3 H123.9 Z" fill="#111"/>
</svg>
<div style="position:absolute;left:23px;top:874px;width:13px;height:13px;border:1px solid #c4c9cc;border-radius:2px;background:#f8f8f8"></div>
<div class="t" style="left:55px;top:874px;font-size:13px;letter-spacing:0.75px;color:#2c363e;font-weight:normal;">1014</div>
<div class="t" style="left:167.5px;top:874px;font-size:13px;letter-spacing:0.75px;color:#2c363e;font-weight:normal;">A</div>
<div class="t" style="left:74.5px;width:400px;text-align:center;top:874px;font-size:13px;letter-spacing:0.75px;color:#2c363e;font-weight:normal;">3307</div>
<div class="t" style="left:348.5px;top:874px;font-size:13px;letter-spacing:0.75px;color:#2c363e;font-weight:normal;">1014008</div>
<div class="t" style="left:488px;top:874px;font-size:13px;letter-spacing:0.75px;color:#2c363e;font-weight:normal;">01.06.2018</div>
<div style="position:absolute;left:632px;top:875px;width:10px;height:10px;border-radius:50%;background:#f0b84a"></div>
<div class="t" style="left:651px;top:874px;font-size:13px;letter-spacing:0.75px;color:#2c363e;font-weight:normal;">Ej bokförda</div>
<div class="t" style="right:601.75px;top:874px;font-size:13px;letter-spacing:0.75px;color:#2c363e;font-weight:normal;">51,30</div>
<div class="t" style="right:461.25px;top:874px;font-size:13px;letter-spacing:0.75px;color:#2c363e;font-weight:normal;">51,30</div>
<div class="t" style="left:946px;width:400px;text-align:center;top:874px;font-size:13px;letter-spacing:0.75px;color:#2c363e;font-weight:normal;">11.06.2018</div>
<svg style="position:absolute;left:1366px;top:874px" width="132" height="16" viewBox="0 0 132 16">
<path d="M2.1 1.7 H7.5 L10.9 5.1 V12.6 Q10.9 13 10.5 13 H2.5 Q2.1 13 2.1 12.6 Z" fill="none" stroke="#d4d4d4" stroke-width="1.2"/><path d="M7.2 1.2 L11.4 5.4 H7.2 Z" fill="#d4d4d4"/>
<circle cx="25.5" cy="7.35" r="5.65" fill="none" stroke="#111" stroke-width="1.5"/><path d="M27.35 5.95 A2.45 2.55 0 1 0 27.35 9.05 L26.05 8.45 A0.8 1.05 0 1 1 26.05 6.55 Z" fill="#111"/>
<circle cx="45.3" cy="7.6" r="2.35" fill="none" stroke="#d4d4d4" stroke-width="1.15"/><path d="M47.65 5 V9.3 Q47.65 10.9 49.1 10.9 Q51 10.9 51 7.6 A5.55 5.55 0 1 0 48.3 12.4 L48.9 12.9" fill="none" stroke="#d4d4d4" stroke-width="1.15"/>
<rect x="59.5" y="2.5" width="10" height="10" fill="none" stroke="#d6d6d6" stroke-width="1.1"/><rect x="61.3" y="4.4" width="1.4" height="1.2" fill="#e2e2e2"/><rect x="61.3" y="6.9" width="1.4" height="1.2" fill="#e2e2e2"/><rect x="61.3" y="9.4" width="1.4" height="1.2" fill="#e2e2e2"/><rect x="63.8" y="4.4" width="4" height="1.2" fill="#e2e2e2"/><rect x="63.8" y="6.9" width="4" height="1.2" fill="#e2e2e2"/><rect x="63.8" y="9.4" width="4" height="1.2" fill="#e2e2e2"/>
<rect x="77.6" y="3.1" width="9.6" height="9.8" rx="1" fill="none" stroke="#d6d6d6" stroke-width="1.3"/><path d="M80.4 8.6 Q83.5 8.3 84.3 6.3 Q84.6 5 83.4 5 Q81.2 5.1 80.5 8.2 Q80.2 10.6 82.2 10.6 Q83.3 10.5 84 9.8" fill="none" stroke="#d8d8d8" stroke-width="0.8"/>
<path d="M102.4 4.6 V10.4 A1.1 1.1 0 0 0 104.6 10.4 V3.3 A1.9 1.9 0 0 0 100.8 3.3 V11 A2.9 2.9 0 0 0 106.6 11 V4.4" fill="none" stroke="#dcdcdc" stroke-width="1"/>
<path d="M116.7 10.9 V3 Q116.7 1.6 118.1 1.6 H125" fill="none" stroke="#111" stroke-width="1.55"/><path d="M119.6 3.8 H124.3 L127.4 6.9 V13.1 Q127.4 13.7 126.8 13.7 H120.2 Q119.6 13.7 119.6 13.1 Z" fill="none" stroke="#111" stroke-width="1.6"/><path d="M123.9 3.4 L127.8 7.3 H123.9 Z" fill="#111"/>
</svg>
<div style="position:absolute;left:23px;top:909px;width:13px;height:13px;border:1px solid #c4c9cc;border-radius:2px;background:#f8f8f8"></div>
<div class="t" style="left:55px;top:909px;font-size:13px;letter-spacing:0.75px;color:#2c363e;font-weight:normal;">1013</div>
<div class="t" style="left:167.5px;top:909px;font-size:13px;letter-spacing:0.75px;color:#2c363e;font-weight:normal;">A</div>
<div class="t" style="left:74.5px;width:400px;text-align:center;top:909px;font-size:13px;letter-spacing:0.75px;color:#2c363e;font-weight:normal;">3307</div>
<div class="t" style="left:348.5px;top:909px;font-size:13px;letter-spacing:0.75px;color:#2c363e;font-weight:normal;">1013009</div>
<div class="t" style="left:488px;top:909px;font-size:13px;letter-spacing:0.75px;color:#2c363e;font-weight:normal;">01.06.2018</div>
<div style="position:absolute;left:632px;top:910px;width:10px;height:10px;border-radius:50%;background:#f0b84a"></div>
<div class="t" style="left:651px;top:909px;font-size:13px;letter-spacing:0.75px;color:#2c363e;font-weight:normal;">Ej bokförda</div>
<div class="t" style="right:601.75px;top:909px;font-size:13px;letter-spacing:0.75px;color:#2c363e;font-weight:normal;">51,30</div>
<div class="t" style="right:461.25px;top:909px;font-size:13px;letter-spacing:0.75px;color:#2c363e;font-weight:normal;">51,30</div>
<div class="t" style="left:946px;width:400px;text-align:center;top:909px;font-size:13px;letter-spacing:0.75px;color:#2c363e;font-weight:normal;">11.06.2018</div>
<svg style="position:absolute;left:1366px;top:909px" width="132" height="16" viewBox="0 0 132 16">
<path d="M2.1 1.7 H7.5 L10.9 5.1 V12.6 Q10.9 13 10.5 13 H2.5 Q2.1 13 2.1 12.6 Z" fill="none" stroke="#d4d4d4" stroke-width="1.2"/><path d="M7.2 1.2 L11.4 5.4 H7.2 Z" fill="#d4d4d4"/>
<circle cx="25.5" cy="7.35" r="5.65" fill="none" stroke="#111" stroke-width="1.5"/><path d="M27.35 5.95 A2.45 2.55 0 1 0 27.35 9.05 L26.05 8.45 A0.8 1.05 0 1 1 26.05 6.55 Z" fill="#111"/>
<circle cx="45.3" cy="7.6" r="2.35" fill="none" stroke="#d4d4d4" stroke-width="1.15"/><path d="M47.65 5 V9.3 Q47.65 10.9 49.1 10.9 Q51 10.9 51 7.6 A5.55 5.55 0 1 0 48.3 12.4 L48.9 12.9" fill="none" stroke="#d4d4d4" stroke-width="1.15"/>
<rect x="59.5" y="2.5" width="10" height="10" fill="none" stroke="#d6d6d6" stroke-width="1.1"/><rect x="61.3" y="4.4" width="1.4" height="1.2" fill="#e2e2e2"/><rect x="61.3" y="6.9" width="1.4" height="1.2" fill="#e2e2e2"/><rect x="61.3" y="9.4" width="1.4" height="1.2" fill="#e2e2e2"/><rect x="63.8" y="4.4" width="4" height="1.2" fill="#e2e2e2"/><rect x="63.8" y="6.9" width="4" height="1.2" fill="#e2e2e2"/><rect x="63.8" y="9.4" width="4" height="1.2" fill="#e2e2e2"/>
<rect x="77.6" y="3.1" width="9.6" height="9.8" rx="1" fill="none" stroke="#d6d6d6" stroke-width="1.3"/><path d="M80.4 8.6 Q83.5 8.3 84.3 6.3 Q84.6 5 83.4 5 Q81.2 5.1 80.5 8.2 Q80.2 10.6 82.2 10.6 Q83.3 10.5 84 9.8" fill="none" stroke="#d8d8d8" stroke-width="0.8"/>
<path d="M102.4 4.6 V10.4 A1.1 1.1 0 0 0 104.6 10.4 V3.3 A1.9 1.9 0 0 0 100.8 3.3 V11 A2.9 2.9 0 0 0 106.6 11 V4.4" fill="none" stroke="#dcdcdc" stroke-width="1"/>
<path d="M116.7 10.9 V3 Q116.7 1.6 118.1 1.6 H125" fill="none" stroke="#111" stroke-width="1.55"/><path d="M119.6 3.8 H124.3 L127.4 6.9 V13.1 Q127.4 13.7 126.8 13.7 H120.2 Q119.6 13.7 119.6 13.1 Z" fill="none" stroke="#111" stroke-width="1.6"/><path d="M123.9 3.4 L127.8 7.3 H123.9 Z" fill="#111"/>
</svg>
<div style="position:absolute;left:23px;top:944px;width:13px;height:13px;border:1px solid #c4c9cc;border-radius:2px;background:#f8f8f8"></div>
<div class="t" style="left:55px;top:944px;font-size:13px;letter-spacing:0.75px;color:#2c363e;font-weight:normal;">1012</div>
<div class="t" style="left:167.5px;top:944px;font-size:13px;letter-spacing:0.75px;color:#2c363e;font-weight:normal;">A</div>
<div class="t" style="left:74.5px;width:400px;text-align:center;top:944px;font-size:13px;letter-spacing:0.75px;color:#2c363e;font-weight:normal;">3307</div>
<div class="t" style="left:348.5px;top:944px;font-size:13px;letter-spacing:0.75px;color:#2c363e;font-weight:normal;">1012000</div>
<div class="t" style="left:488px;top:944px;font-size:13px;letter-spacing:0.75px;color:#2c363e;font-weight:normal;">01.06.2018</div>
<div style="position:absolute;left:632px;top:945px;width:10px;height:10px;border-radius:50%;background:#f0b84a"></div>
<div class="t" style="left:651px;top:944px;font-size:13px;letter-spacing:0.75px;color:#2c363e;font-weight:normal;">Ej bokförda</div>
<div class="t" style="right:601.75px;top:944px;font-size:13px;letter-spacing:0.75px;color:#2c363e;font-weight:normal;">51,30</div>
<div class="t" style="right:461.25px;top:944px;font-size:13px;letter-spacing:0.75px;color:#2c363e;font-weight:normal;">51,30</div>
<div class="t" style="left:946px;width:400px;text-align:center;top:944px;font-size:13px;letter-spacing:0.75px;color:#2c363e;font-weight:normal;">11.06.2018</div>
<svg style="position:absolute;left:1366px;top:944px" width="132" height="16" viewBox="0 0 132 16">
<path d="M2.1 1.7 H7.5 L10.9 5.1 V12.6 Q10.9 13 10.5 13 H2.5 Q2.1 13 2.1 12.6 Z" fill="none" stroke="#d4d4d4" stroke-width="1.2"/><path d="M7.2 1.2 L11.4 5.4 H7.2 Z" fill="#d4d4d4"/>
<circle cx="25.5" cy="7.35" r="5.65" fill="none" stroke="#111" stroke-width="1.5"/><path d="M27.35 5.95 A2.45 2.55 0 1 0 27.35 9.05 L26.05 8.45 A0.8 1.05 0 1 1 26.05 6.55 Z" fill="#111"/>
<circle cx="45.3" cy="7.6" r="2.35" fill="none" stroke="#d4d4d4" stroke-width="1.15"/><path d="M47.65 5 V9.3 Q47.65 10.9 49.1 10.9 Q51 10.9 51 7.6 A5.55 5.55 0 1 0 48.3 12.4 L48.9 12.9" fill="none" stroke="#d4d4d4" stroke-width="1.15"/>
<rect x="59.5" y="2.5" width="10" height="10" fill="none" stroke="#d6d6d6" stroke-width="1.1"/><rect x="61.3" y="4.4" width="1.4" height="1.2" fill="#e2e2e2"/><rect x="61.3" y="6.9" width="1.4" height="1.2" fill="#e2e2e2"/><rect x="61.3" y="9.4" width="1.4" height="1.2" fill="#e2e2e2"/><rect x="63.8" y="4.4" width="4" height="1.2" fill="#e2e2e2"/><rect x="63.8" y="6.9" width="4" height="1.2" fill="#e2e2e2"/><rect x="63.8" y="9.4" width="4" height="1.2" fill="#e2e2e2"/>
<rect x="77.6" y="3.1" width="9.6" height="9.8" rx="1" fill="none" stroke="#d6d6d6" stroke-width="1.3"/><path d="M80.4 8.6 Q83.5 8.3 84.3 6.3 Q84.6 5 83.4 5 Q81.2 5.1 80.5 8.2 Q80.2 10.6 82.2 10.6 Q83.3 10.5 84 9.8" fill="none" stroke="#d8d8d8" stroke-width="0.8"/>
<path d="M102.4 4.6 V10.4 A1.1 1.1 0 0 0 104.6 10.4 V3.3 A1.9 1.9 0 0 0 100.8 3.3 V11 A2.9 2.9 0 0 0 106.6 11 V4.4" fill="none" stroke="#dcdcdc" stroke-width="1"/>
<path d="M116.7 10.9 V3 Q116.7 1.6 118.1 1.6 H125" fill="none" stroke="#111" stroke-width="1.55"/><path d="M119.6 3.8 H124.3 L127.4 6.9 V13.1 Q127.4 13.7 126.8 13.7 H120.2 Q119.6 13.7 119.6 13.1 Z" fill="none" stroke="#111" stroke-width="1.6"/><path d="M123.9 3.4 L127.8 7.3 H123.9 Z" fill="#111"/>
</svg>
<div style="position:absolute;left:23px;top:979px;width:13px;height:13px;border:1px solid #c4c9cc;border-radius:2px;background:#f8f8f8"></div>
<div class="t" style="left:55px;top:979px;font-size:13px;letter-spacing:0.75px;color:#2c363e;font-weight:normal;">1011</div>
<div class="t" style="left:167.5px;top:979px;font-size:13px;letter-spacing:0.75px;color:#2c363e;font-weight:normal;">A</div>
<div class="t" style="left:74.5px;width:400px;text-align:center;top:979px;font-size:13px;letter-spacing:0.75px;color:#2c363e;font-weight:normal;">3307</div>
<div class="t" style="left:348.5px;top:979px;font-size:13px;letter-spacing:0.75px;color:#2c363e;font-weight:normal;">1011001</div>
<div class="t" style="left:488px;top:979px;font-size:13px;letter-spacing:0.75px;color:#2c363e;font-weight:normal;">01.06.2018</div>
<div style="position:absolute;left:632px;top:980px;width:10px;height:10px;border-radius:50%;background:#f0b84a"></div>
<div class="t" style="left:651px;top:979px;font-size:13px;letter-spacing:0.75px;color:#2c363e;font-weight:normal;">Ej bokförda</div>
<div class="t" style="right:601.75px;top:979px;font-size:13px;letter-spacing:0.75px;color:#2c363e;font-weight:normal;">51,30</div>
<div class="t" style="right:461.25px;top:979px;font-size:13px;letter-spacing:0.75px;color:#2c363e;font-weight:normal;">51,30</div>
<div class="t" style="left:946px;width:400px;text-align:center;top:979px;font-size:13px;letter-spacing:0.75px;color:#2c363e;font-weight:normal;">11.06.2018</div>
<svg style="position:absolute;left:1366px;top:979px" width="132" height="16" viewBox="0 0 132 16">
<path d="M2.1 1.7 H7.5 L10.9 5.1 V12.6 Q10.9 13 10.5 13 H2.5 Q2.1 13 2.1 12.6 Z" fill="none" stroke="#d4d4d4" stroke-width="1.2"/><path d="M7.2 1.2 L11.4 5.4 H7.2 Z" fill="#d4d4d4"/>
<circle cx="25.5" cy="7.35" r="5.65" fill="none" stroke="#111" stroke-width="1.5"/><path d="M27.35 5.95 A2.45 2.55 0 1 0 27.35 9.05 L26.05 8.45 A0.8 1.05 0 1 1 26.05 6.55 Z" fill="#111"/>
<circle cx="45.3" cy="7.6" r="2.35" fill="none" stroke="#d4d4d4" stroke-width="1.15"/><path d="M47.65 5 V9.3 Q47.65 10.9 49.1 10.9 Q51 10.9 51 7.6 A5.55 5.55 0 1 0 48.3 12.4 L48.9 12.9" fill="none" stroke="#d4d4d4" stroke-width="1.15"/>
<rect x="59.5" y="2.5" width="10" height="10" fill="none" stroke="#d6d6d6" stroke-width="1.1"/><rect x="61.3" y="4.4" width="1.4" height="1.2" fill="#e2e2e2"/><rect x="61.3" y="6.9" width="1.4" height="1.2" fill="#e2e2e2"/><rect x="61.3" y="9.4" width="1.4" height="1.2" fill="#e2e2e2"/><rect x="63.8" y="4.4" width="4" height="1.2" fill="#e2e2e2"/><rect x="63.8" y="6.9" width="4" height="1.2" fill="#e2e2e2"/><rect x="63.8" y="9.4" width="4" height="1.2" fill="#e2e2e2"/>
<rect x="77.6" y="3.1" width="9.6" height="9.8" rx="1" fill="none" stroke="#d6d6d6" stroke-width="1.3"/><path d="M80.4 8.6 Q83.5 8.3 84.3 6.3 Q84.6 5 83.4 5 Q81.2 5.1 80.5 8.2 Q80.2 10.6 82.2 10.6 Q83.3 10.5 84 9.8" fill="none" stroke="#d8d8d8" stroke-width="0.8"/>
<path d="M102.4 4.6 V10.4 A1.1 1.1 0 0 0 104.6 10.4 V3.3 A1.9 1.9 0 0 0 100.8 3.3 V11 A2.9 2.9 0 0 0 106.6 11 V4.4" fill="none" stroke="#dcdcdc" stroke-width="1"/>
<path d="M116.7 10.9 V3 Q116.7 1.6 118.1 1.6 H125" fill="none" stroke="#111" stroke-width="1.55"/><path d="M119.6 3.8 H124.3 L127.4 6.9 V13.1 Q127.4 13.7 126.8 13.7 H120.2 Q119.6 13.7 119.6 13.1 Z" fill="none" stroke="#111" stroke-width="1.6"/><path d="M123.9 3.4 L127.8 7.3 H123.9 Z" fill="#111"/>
</svg>
</body></html>
